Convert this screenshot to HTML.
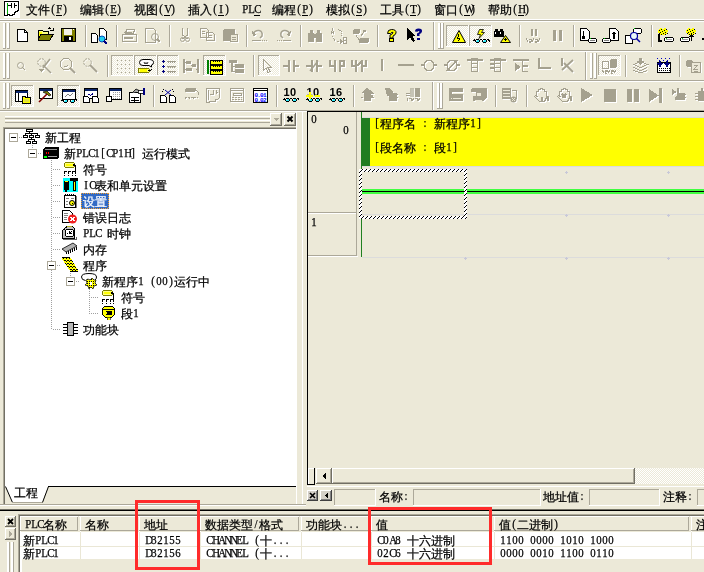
<!DOCTYPE html><html><head><meta charset="utf-8"><style>
html,body{margin:0;padding:0}
body{width:704px;height:572px;position:relative;overflow:hidden;background:#ECE9D8}
div,svg{position:absolute}
.t{will-change:transform;-webkit-text-stroke:0.25px currentColor;white-space:nowrap;font-size:12px;line-height:12px;font-family:"Liberation Sans",sans-serif}
.t span{position:static}
.t i{display:inline-block;width:6px;text-align:center;font-style:normal;font-family:"Liberation Serif",serif;transform:scaleX(.9);position:relative;top:-1px}
.c{font-family:"Liberation Sans",sans-serif}
</style></head><body>
<div style="left:4px;top:0px;width:16px;height:18px;background:#FFFFFF;"></div>
<svg style="left:4px;top:0px" width="16" height="18" viewBox="0 0 16 18" shape-rendering="crispEdges"><path d="M0.5 1.5H14.5V10.5H13.5V11.5H11.5V12.5H10.5V14.5H8.5V15.5H5.5V14.5H3.5V15.5H0.5Z" fill="none" stroke="#000"/><rect x="3" y="3" width="1" height="11" fill="#0a0"/><path d="M4 5.5H7M7.5 3V8M10.5 3V8M11 5.5H13" stroke="#000" fill="none"/></svg>
<div class="t " style="left:26px;top:4px;color:#000;"><span class="c">文件</span><i>(</i><i>F</i><i>)</i></div>
<div style="left:56px;top:15px;width:6px;height:1px;background:#000;"></div>
<div class="t " style="left:80px;top:4px;color:#000;"><span class="c">编辑</span><i>(</i><i>E</i><i>)</i></div>
<div style="left:110px;top:15px;width:6px;height:1px;background:#000;"></div>
<div class="t " style="left:134px;top:4px;color:#000;"><span class="c">视图</span><i>(</i><i>V</i><i>)</i></div>
<div style="left:164px;top:15px;width:6px;height:1px;background:#000;"></div>
<div class="t " style="left:188px;top:4px;color:#000;"><span class="c">插入</span><i>(</i><i>I</i><i>)</i></div>
<div style="left:218px;top:15px;width:6px;height:1px;background:#000;"></div>
<div class="t " style="left:272px;top:4px;color:#000;"><span class="c">编程</span><i>(</i><i>P</i><i>)</i></div>
<div style="left:302px;top:15px;width:6px;height:1px;background:#000;"></div>
<div class="t " style="left:326px;top:4px;color:#000;"><span class="c">模拟</span><i>(</i><i>S</i><i>)</i></div>
<div style="left:356px;top:15px;width:6px;height:1px;background:#000;"></div>
<div class="t " style="left:380px;top:4px;color:#000;"><span class="c">工具</span><i>(</i><i>T</i><i>)</i></div>
<div style="left:410px;top:15px;width:6px;height:1px;background:#000;"></div>
<div class="t " style="left:434px;top:4px;color:#000;"><span class="c">窗口</span><i>(</i><i>W</i><i>)</i></div>
<div style="left:464px;top:15px;width:6px;height:1px;background:#000;"></div>
<div class="t " style="left:488px;top:4px;color:#000;"><span class="c">帮助</span><i>(</i><i>H</i><i>)</i></div>
<div style="left:518px;top:15px;width:6px;height:1px;background:#000;"></div>
<div class="t " style="left:242px;top:4px;color:#000;"><i>P</i><i>L</i><i>C</i></div>
<div style="left:254px;top:15px;width:6px;height:1px;background:#000;"></div>
<div style="left:0px;top:19px;width:704px;height:1px;background:#FFFFFF;"></div>
<div style="left:0px;top:20px;width:704px;height:1px;background:#ACA899;"></div>
<div style="left:0px;top:21px;width:704px;height:1px;background:#FFFFFF;"></div>
<div style="left:0px;top:50px;width:704px;height:1px;background:#ACA899;"></div>
<div style="left:0px;top:51px;width:704px;height:1px;background:#FFFFFF;"></div>
<div style="left:0px;top:80px;width:704px;height:1px;background:#ACA899;"></div>
<div style="left:0px;top:81px;width:704px;height:1px;background:#FFFFFF;"></div>
<div style="left:0px;top:110px;width:307px;height:1px;background:#ACA899;"></div>
<div style="left:0px;top:111px;width:307px;height:1px;background:#FFFFFF;"></div>
<div style="left:307px;top:110px;width:397px;height:1px;background:#ACA899;"></div>
<div style="left:3px;top:23px;width:2px;height:26px;background:#FFFFFF;"></div>
<div style="left:5px;top:23px;width:1px;height:26px;background:#ACA899;"></div>
<div style="left:3px;top:48px;width:3px;height:1px;background:#ACA899;"></div>
<div style="left:7px;top:23px;width:2px;height:26px;background:#FFFFFF;"></div>
<div style="left:9px;top:23px;width:1px;height:26px;background:#ACA899;"></div>
<div style="left:7px;top:48px;width:3px;height:1px;background:#ACA899;"></div>
<div style="left:3px;top:53px;width:2px;height:26px;background:#FFFFFF;"></div>
<div style="left:5px;top:53px;width:1px;height:26px;background:#ACA899;"></div>
<div style="left:3px;top:78px;width:3px;height:1px;background:#ACA899;"></div>
<div style="left:7px;top:53px;width:2px;height:26px;background:#FFFFFF;"></div>
<div style="left:9px;top:53px;width:1px;height:26px;background:#ACA899;"></div>
<div style="left:7px;top:78px;width:3px;height:1px;background:#ACA899;"></div>
<div style="left:3px;top:83px;width:2px;height:26px;background:#FFFFFF;"></div>
<div style="left:5px;top:83px;width:1px;height:26px;background:#ACA899;"></div>
<div style="left:3px;top:108px;width:3px;height:1px;background:#ACA899;"></div>
<div style="left:7px;top:83px;width:2px;height:26px;background:#FFFFFF;"></div>
<div style="left:9px;top:83px;width:1px;height:26px;background:#ACA899;"></div>
<div style="left:7px;top:108px;width:3px;height:1px;background:#ACA899;"></div>
<div style="left:85px;top:25px;width:1px;height:22px;background:#ACA899;"></div>
<div style="left:86px;top:25px;width:1px;height:22px;background:#FFFFFF;"></div>
<div style="left:116px;top:25px;width:1px;height:22px;background:#ACA899;"></div>
<div style="left:117px;top:25px;width:1px;height:22px;background:#FFFFFF;"></div>
<div style="left:169px;top:25px;width:1px;height:22px;background:#ACA899;"></div>
<div style="left:170px;top:25px;width:1px;height:22px;background:#FFFFFF;"></div>
<div style="left:246px;top:25px;width:1px;height:22px;background:#ACA899;"></div>
<div style="left:247px;top:25px;width:1px;height:22px;background:#FFFFFF;"></div>
<div style="left:300px;top:25px;width:1px;height:22px;background:#ACA899;"></div>
<div style="left:301px;top:25px;width:1px;height:22px;background:#FFFFFF;"></div>
<div style="left:377px;top:25px;width:1px;height:22px;background:#ACA899;"></div>
<div style="left:378px;top:25px;width:1px;height:22px;background:#FFFFFF;"></div>
<div style="left:519px;top:25px;width:1px;height:22px;background:#ACA899;"></div>
<div style="left:520px;top:25px;width:1px;height:22px;background:#FFFFFF;"></div>
<div style="left:573px;top:25px;width:1px;height:22px;background:#ACA899;"></div>
<div style="left:574px;top:25px;width:1px;height:22px;background:#FFFFFF;"></div>
<div style="left:651px;top:25px;width:1px;height:22px;background:#ACA899;"></div>
<div style="left:652px;top:25px;width:1px;height:22px;background:#FFFFFF;"></div>
<div style="left:433px;top:22px;width:1px;height:28px;background:#ACA899;"></div>
<div style="left:434px;top:22px;width:1px;height:28px;background:#FFFFFF;"></div>
<div style="left:438px;top:23px;width:2px;height:26px;background:#FFFFFF;"></div>
<div style="left:440px;top:23px;width:1px;height:26px;background:#ACA899;"></div>
<div style="left:438px;top:48px;width:3px;height:1px;background:#ACA899;"></div>
<div style="left:441px;top:23px;width:2px;height:26px;background:#FFFFFF;"></div>
<div style="left:443px;top:23px;width:1px;height:26px;background:#ACA899;"></div>
<div style="left:441px;top:48px;width:3px;height:1px;background:#ACA899;"></div>
<div style="left:107px;top:55px;width:1px;height:22px;background:#ACA899;"></div>
<div style="left:108px;top:55px;width:1px;height:22px;background:#FFFFFF;"></div>
<div style="left:253px;top:55px;width:1px;height:22px;background:#ACA899;"></div>
<div style="left:254px;top:55px;width:1px;height:22px;background:#FFFFFF;"></div>
<div style="left:625px;top:55px;width:1px;height:22px;background:#ACA899;"></div>
<div style="left:626px;top:55px;width:1px;height:22px;background:#FFFFFF;"></div>
<div style="left:679px;top:55px;width:1px;height:22px;background:#ACA899;"></div>
<div style="left:680px;top:55px;width:1px;height:22px;background:#FFFFFF;"></div>
<div style="left:585px;top:52px;width:1px;height:28px;background:#ACA899;"></div>
<div style="left:586px;top:52px;width:1px;height:28px;background:#FFFFFF;"></div>
<div style="left:590px;top:53px;width:2px;height:26px;background:#FFFFFF;"></div>
<div style="left:592px;top:53px;width:1px;height:26px;background:#ACA899;"></div>
<div style="left:590px;top:78px;width:3px;height:1px;background:#ACA899;"></div>
<div style="left:594px;top:53px;width:2px;height:26px;background:#FFFFFF;"></div>
<div style="left:596px;top:53px;width:1px;height:26px;background:#ACA899;"></div>
<div style="left:594px;top:78px;width:3px;height:1px;background:#ACA899;"></div>
<div style="left:446px;top:25px;width:23px;height:22px;background:#F5F4EC;background-image:repeating-conic-gradient(#fff 0 25%,#ECE9D8 0 50%);background-size:2px 2px;"></div>
<div style="left:446px;top:25px;width:23px;height:1px;background:#ACA899;"></div>
<div style="left:446px;top:25px;width:1px;height:22px;background:#ACA899;"></div>
<div style="left:446px;top:46px;width:23px;height:1px;background:#FFFFFF;"></div>
<div style="left:468px;top:25px;width:1px;height:22px;background:#FFFFFF;"></div>
<div style="left:469px;top:25px;width:23px;height:22px;background:#F5F4EC;background-image:repeating-conic-gradient(#fff 0 25%,#ECE9D8 0 50%);background-size:2px 2px;"></div>
<div style="left:469px;top:25px;width:23px;height:1px;background:#ACA899;"></div>
<div style="left:469px;top:25px;width:1px;height:22px;background:#ACA899;"></div>
<div style="left:469px;top:46px;width:23px;height:1px;background:#FFFFFF;"></div>
<div style="left:491px;top:25px;width:1px;height:22px;background:#FFFFFF;"></div>
<div style="left:111px;top:55px;width:23px;height:21px;background:#F5F4EC;background-image:repeating-conic-gradient(#fff 0 25%,#ECE9D8 0 50%);background-size:2px 2px;"></div>
<div style="left:111px;top:55px;width:23px;height:1px;background:#ACA899;"></div>
<div style="left:111px;top:55px;width:1px;height:21px;background:#ACA899;"></div>
<div style="left:111px;top:75px;width:23px;height:1px;background:#FFFFFF;"></div>
<div style="left:133px;top:55px;width:1px;height:21px;background:#FFFFFF;"></div>
<div style="left:134px;top:55px;width:23px;height:21px;background:#F5F4EC;background-image:repeating-conic-gradient(#fff 0 25%,#ECE9D8 0 50%);background-size:2px 2px;"></div>
<div style="left:134px;top:55px;width:23px;height:1px;background:#ACA899;"></div>
<div style="left:134px;top:55px;width:1px;height:21px;background:#ACA899;"></div>
<div style="left:134px;top:75px;width:23px;height:1px;background:#FFFFFF;"></div>
<div style="left:156px;top:55px;width:1px;height:21px;background:#FFFFFF;"></div>
<div style="left:157px;top:55px;width:22px;height:21px;background:#F5F4EC;background-image:repeating-conic-gradient(#fff 0 25%,#ECE9D8 0 50%);background-size:2px 2px;"></div>
<div style="left:157px;top:55px;width:22px;height:1px;background:#ACA899;"></div>
<div style="left:157px;top:55px;width:1px;height:21px;background:#ACA899;"></div>
<div style="left:157px;top:75px;width:22px;height:1px;background:#FFFFFF;"></div>
<div style="left:178px;top:55px;width:1px;height:21px;background:#FFFFFF;"></div>
<div style="left:203px;top:55px;width:23px;height:21px;background:#F5F4EC;background-image:repeating-conic-gradient(#fff 0 25%,#ECE9D8 0 50%);background-size:2px 2px;"></div>
<div style="left:203px;top:55px;width:23px;height:1px;background:#ACA899;"></div>
<div style="left:203px;top:55px;width:1px;height:21px;background:#ACA899;"></div>
<div style="left:203px;top:75px;width:23px;height:1px;background:#FFFFFF;"></div>
<div style="left:225px;top:55px;width:1px;height:21px;background:#FFFFFF;"></div>
<div style="left:258px;top:55px;width:22px;height:21px;background:#F5F4EC;background-image:repeating-conic-gradient(#fff 0 25%,#ECE9D8 0 50%);background-size:2px 2px;"></div>
<div style="left:258px;top:55px;width:22px;height:1px;background:#ACA899;"></div>
<div style="left:258px;top:55px;width:1px;height:21px;background:#ACA899;"></div>
<div style="left:258px;top:75px;width:22px;height:1px;background:#FFFFFF;"></div>
<div style="left:279px;top:55px;width:1px;height:21px;background:#FFFFFF;"></div>
<div style="left:598px;top:55px;width:23px;height:21px;background:#F5F4EC;background-image:repeating-conic-gradient(#fff 0 25%,#ECE9D8 0 50%);background-size:2px 2px;"></div>
<div style="left:598px;top:55px;width:23px;height:1px;background:#ACA899;"></div>
<div style="left:598px;top:55px;width:1px;height:21px;background:#ACA899;"></div>
<div style="left:598px;top:75px;width:23px;height:1px;background:#FFFFFF;"></div>
<div style="left:620px;top:55px;width:1px;height:21px;background:#FFFFFF;"></div>
<div style="left:11px;top:85px;width:23px;height:22px;background:#F5F4EC;background-image:repeating-conic-gradient(#fff 0 25%,#ECE9D8 0 50%);background-size:2px 2px;"></div>
<div style="left:11px;top:85px;width:23px;height:1px;background:#ACA899;"></div>
<div style="left:11px;top:85px;width:1px;height:22px;background:#ACA899;"></div>
<div style="left:11px;top:106px;width:23px;height:1px;background:#FFFFFF;"></div>
<div style="left:33px;top:85px;width:1px;height:22px;background:#FFFFFF;"></div>
<div style="left:57px;top:85px;width:23px;height:22px;background:#F5F4EC;background-image:repeating-conic-gradient(#fff 0 25%,#ECE9D8 0 50%);background-size:2px 2px;"></div>
<div style="left:57px;top:85px;width:23px;height:1px;background:#ACA899;"></div>
<div style="left:57px;top:85px;width:1px;height:22px;background:#ACA899;"></div>
<div style="left:57px;top:106px;width:23px;height:1px;background:#FFFFFF;"></div>
<div style="left:79px;top:85px;width:1px;height:22px;background:#FFFFFF;"></div>
<div style="left:153px;top:85px;width:1px;height:22px;background:#ACA899;"></div>
<div style="left:154px;top:85px;width:1px;height:22px;background:#FFFFFF;"></div>
<div style="left:276px;top:85px;width:1px;height:22px;background:#ACA899;"></div>
<div style="left:277px;top:85px;width:1px;height:22px;background:#FFFFFF;"></div>
<div style="left:353px;top:85px;width:1px;height:22px;background:#ACA899;"></div>
<div style="left:354px;top:85px;width:1px;height:22px;background:#FFFFFF;"></div>
<div style="left:495px;top:85px;width:1px;height:22px;background:#ACA899;"></div>
<div style="left:496px;top:85px;width:1px;height:22px;background:#FFFFFF;"></div>
<div style="left:526px;top:85px;width:1px;height:22px;background:#ACA899;"></div>
<div style="left:527px;top:85px;width:1px;height:22px;background:#FFFFFF;"></div>
<div style="left:432px;top:82px;width:1px;height:28px;background:#ACA899;"></div>
<div style="left:433px;top:82px;width:1px;height:28px;background:#FFFFFF;"></div>
<div style="left:437px;top:83px;width:2px;height:26px;background:#FFFFFF;"></div>
<div style="left:439px;top:83px;width:1px;height:26px;background:#ACA899;"></div>
<div style="left:437px;top:108px;width:3px;height:1px;background:#ACA899;"></div>
<div style="left:440px;top:83px;width:2px;height:26px;background:#FFFFFF;"></div>
<div style="left:442px;top:83px;width:1px;height:26px;background:#ACA899;"></div>
<div style="left:440px;top:108px;width:3px;height:1px;background:#ACA899;"></div>
<svg style="left:17px;top:29px" width="11" height="13" viewBox="0 0 11 13" shape-rendering="crispEdges"><path d="M0.5 0.5H7.5L10.5 3.5V12.5H0.5Z" fill="#fff" stroke="#000"/><path d="M7.5 0.5V3.5H10.5" fill="none" stroke="#000"/></svg>
<svg style="left:38px;top:27px" width="16" height="14" viewBox="0 0 16 14" shape-rendering="crispEdges"><path d="M0.5 3.5H4.5L5.5 4.5H10.5V12.5H0.5Z" fill="#FFFF80" stroke="#000"/><rect x="1" y="5" width="3" height="6" fill="#ff0"/><path d="M3 7H15.5L12 13H0Z" fill="#808000" stroke="#000" stroke-width="1"/><path d="M9.5 2.5Q11 0 13.5 1.5M12 3H15V1" fill="none" stroke="#000"/></svg>
<svg style="left:61px;top:28px" width="15" height="14" viewBox="0 0 15 14" shape-rendering="crispEdges"><rect x="0" y="0" width="15" height="14" fill="#000"/><rect x="1" y="1" width="13" height="12" fill="#808000"/><rect x="3" y="1" width="8" height="6" fill="#F4F2E6"/><rect x="3" y="8" width="9" height="5" fill="#000"/><rect x="8" y="9" width="2" height="3" fill="#fff"/><rect x="12" y="1" width="1" height="1" fill="#fff"/></svg>
<svg style="left:91px;top:28px" width="17" height="16" viewBox="0 0 17 16" shape-rendering="crispEdges"><path d="M0.5 5.5H4.5L6.5 7.5V14.5H0.5Z" fill="#fff" stroke="#000"/><path d="M8.5 0.5H12.5L15.5 3.5V11.5H8.5Z" fill="#fff" stroke="#000"/><circle cx="11" cy="11" r="3" fill="#20D0F0" stroke="#0050C0" shape-rendering="auto"/><path d="M13 13L16 16" stroke="#000080" stroke-width="2"/></svg>
<svg style="left:122px;top:29px" width="17" height="15" viewBox="0 0 17 15" shape-rendering="crispEdges"><g transform="translate(1,1)" style="color:#fff"><path d="M4.5 0.5H12.5L11.5 4.5H3.5Z" fill="none" stroke="currentColor"/><path d="M0.5 5.5H14.5V12.5H0.5Z" fill="none" stroke="currentColor"/><rect x="2" y="8" width="9" height="2" fill="currentColor"/><path d="M2 3H10" stroke="currentColor"/></g><g style="color:#A5A18F"><path d="M4.5 0.5H12.5L11.5 4.5H3.5Z" fill="none" stroke="currentColor"/><path d="M0.5 5.5H14.5V12.5H0.5Z" fill="none" stroke="currentColor"/><rect x="2" y="8" width="9" height="2" fill="currentColor"/><path d="M2 3H10" stroke="currentColor"/></g></svg>
<svg style="left:145px;top:28px" width="17" height="16" viewBox="0 0 17 16" shape-rendering="crispEdges"><g transform="translate(1,1)" style="color:#fff"><path d="M0.5 0.5H8.5L10.5 2.5V14.5H0.5Z" fill="none" stroke="currentColor"/><circle cx="10" cy="9" r="3.5" fill="none" stroke="currentColor" shape-rendering="auto"/><path d="M12 11L15 14" stroke="currentColor" stroke-width="2"/></g><g style="color:#A5A18F"><path d="M0.5 0.5H8.5L10.5 2.5V14.5H0.5Z" fill="none" stroke="currentColor"/><circle cx="10" cy="9" r="3.5" fill="none" stroke="currentColor" shape-rendering="auto"/><path d="M12 11L15 14" stroke="currentColor" stroke-width="2"/></g></svg>
<svg style="left:180px;top:28px" width="11" height="15" viewBox="0 0 11 15" shape-rendering="crispEdges"><g transform="translate(1,1)" style="color:#fff"><path d="M2.5 0V7L7.5 11M7.5 0V7L2.5 11" fill="none" stroke="currentColor"/><circle cx="2.5" cy="11.5" r="2" fill="none" stroke="currentColor" shape-rendering="auto"/><circle cx="7.5" cy="11.5" r="2" fill="none" stroke="currentColor" shape-rendering="auto"/></g><g style="color:#A5A18F"><path d="M2.5 0V7L7.5 11M7.5 0V7L2.5 11" fill="none" stroke="currentColor"/><circle cx="2.5" cy="11.5" r="2" fill="none" stroke="currentColor" shape-rendering="auto"/><circle cx="7.5" cy="11.5" r="2" fill="none" stroke="currentColor" shape-rendering="auto"/></g></svg>
<svg style="left:200px;top:28px" width="16" height="14" viewBox="0 0 16 14" shape-rendering="crispEdges"><g transform="translate(1,1)" style="color:#fff"><path d="M0.5 0.5H6.5L8.5 2.5V9.5H0.5Z" fill="none" stroke="currentColor"/><path d="M6.5 4.5H12.5L14.5 6.5V12.5H6.5Z" fill="none" stroke="currentColor"/><path d="M2 3H5M2 5H5M8 7H12M8 9H12" stroke="currentColor"/></g><g style="color:#A5A18F"><path d="M0.5 0.5H6.5L8.5 2.5V9.5H0.5Z" fill="none" stroke="currentColor"/><path d="M6.5 4.5H12.5L14.5 6.5V12.5H6.5Z" fill="none" stroke="currentColor"/><path d="M2 3H5M2 5H5M8 7H12M8 9H12" stroke="currentColor"/></g></svg>
<svg style="left:223px;top:28px" width="16" height="15" viewBox="0 0 16 15" shape-rendering="crispEdges"><g transform="translate(1,1)" style="color:#fff"><rect x="0" y="1" width="12" height="12" rx="2" fill="currentColor"/><path d="M7.5 6.5H14.5V13.5H7.5Z" fill="#ECE9D8" stroke="currentColor"/><path d="M9 9H13M9 11H13" stroke="currentColor"/></g><g style="color:#A5A18F"><rect x="0" y="1" width="12" height="12" rx="2" fill="currentColor"/><path d="M7.5 6.5H14.5V13.5H7.5Z" fill="#ECE9D8" stroke="currentColor"/><path d="M9 9H13M9 11H13" stroke="currentColor"/></g></svg>
<svg style="left:252px;top:29px" width="17" height="14" viewBox="0 0 17 14" shape-rendering="crispEdges"><g transform="translate(1,1)" style="color:#fff"><path d="M1 5Q3 1 7 1.5Q11 2.5 10 7L8 9" fill="none" stroke="currentColor" stroke-width="1.5" shape-rendering="auto"/><path d="M0 2L1 7L5 6Z" fill="currentColor"/><path d="M0 11H9" stroke="currentColor"/><path d="M10 11H16" stroke="currentColor" stroke-dasharray="1 1"/></g><g style="color:#A5A18F"><path d="M1 5Q3 1 7 1.5Q11 2.5 10 7L8 9" fill="none" stroke="currentColor" stroke-width="1.5" shape-rendering="auto"/><path d="M0 2L1 7L5 6Z" fill="currentColor"/><path d="M0 11H9" stroke="currentColor"/><path d="M10 11H16" stroke="currentColor" stroke-dasharray="1 1"/></g></svg>
<svg style="left:277px;top:29px" width="15" height="14" viewBox="0 0 15 14" shape-rendering="crispEdges"><g transform="translate(1,1)" style="color:#fff"><path d="M13 5Q11 1 7 1.5Q3 2.5 4 7L6 9" fill="none" stroke="currentColor" stroke-width="1.5" shape-rendering="auto"/><path d="M14 2L13 7L9 6Z" fill="currentColor"/><path d="M6 11H14" stroke="currentColor"/><path d="M0 11H5" stroke="currentColor" stroke-dasharray="1 1"/></g><g style="color:#A5A18F"><path d="M13 5Q11 1 7 1.5Q3 2.5 4 7L6 9" fill="none" stroke="currentColor" stroke-width="1.5" shape-rendering="auto"/><path d="M14 2L13 7L9 6Z" fill="currentColor"/><path d="M6 11H14" stroke="currentColor"/><path d="M0 11H5" stroke="currentColor" stroke-dasharray="1 1"/></g></svg>
<svg style="left:308px;top:30px" width="16" height="13" viewBox="0 0 16 13" shape-rendering="crispEdges"><g transform="translate(1,1)" style="color:#fff"><rect x="2" y="0" width="3" height="3" fill="currentColor"/><rect x="9" y="0" width="3" height="3" fill="currentColor"/><rect x="0" y="3" width="6" height="9" fill="currentColor"/><rect x="8" y="3" width="6" height="9" fill="currentColor"/><rect x="5" y="4" width="4" height="4" fill="currentColor"/></g><g style="color:#A5A18F"><rect x="2" y="0" width="3" height="3" fill="currentColor"/><rect x="9" y="0" width="3" height="3" fill="currentColor"/><rect x="0" y="3" width="6" height="9" fill="currentColor"/><rect x="8" y="3" width="6" height="9" fill="currentColor"/><rect x="5" y="4" width="4" height="4" fill="currentColor"/></g></svg>
<svg style="left:330px;top:28px" width="17" height="16" viewBox="0 0 17 16" shape-rendering="crispEdges"><g transform="translate(1,1)" style="color:#fff"><path d="M1 6L2.5 1L4 6M1.5 4H3.5" fill="none" stroke="currentColor"/><path d="M2.5 8Q3 13 9 14" fill="none" stroke="currentColor" stroke-dasharray="1 1"/><path d="M10 11V16L13 13.5Z" fill="currentColor"/><path d="M8 1L11 3V8" fill="none" stroke="currentColor" stroke-dasharray="1 1"/><path d="M13.5 9.5H16V15.5H13.5ZM13.5 12.5H16" fill="none" stroke="currentColor"/></g><g style="color:#A5A18F"><path d="M1 6L2.5 1L4 6M1.5 4H3.5" fill="none" stroke="currentColor"/><path d="M2.5 8Q3 13 9 14" fill="none" stroke="currentColor" stroke-dasharray="1 1"/><path d="M10 11V16L13 13.5Z" fill="currentColor"/><path d="M8 1L11 3V8" fill="none" stroke="currentColor" stroke-dasharray="1 1"/><path d="M13.5 9.5H16V15.5H13.5ZM13.5 12.5H16" fill="none" stroke="currentColor"/></g></svg>
<svg style="left:353px;top:28px" width="17" height="16" viewBox="0 0 17 16" shape-rendering="crispEdges"><g transform="translate(1,1)" style="color:#fff"><rect x="0" y="1" width="7" height="5" rx="2" fill="currentColor"/><rect x="6" y="10" width="10" height="5" rx="2" fill="currentColor"/><path d="M8 8L12 2M10 2H12V4M3 7L6 12" fill="none" stroke="currentColor"/></g><g style="color:#A5A18F"><rect x="0" y="1" width="7" height="5" rx="2" fill="currentColor"/><rect x="6" y="10" width="10" height="5" rx="2" fill="currentColor"/><path d="M8 8L12 2M10 2H12V4M3 7L6 12" fill="none" stroke="currentColor"/></g></svg>
<svg style="left:386px;top:29px" width="12" height="13" viewBox="0 0 12 13" shape-rendering="crispEdges"><path d="M1.5 4.5Q1.5 0.5 5.5 0.5Q10.5 0.5 10 4Q9.5 6 7 7V9H4V6Q7 5 7 3.5Q6 2.5 4.5 4.5Z" fill="#FFFF00" stroke="#000" shape-rendering="auto"/><rect x="3.5" y="9.5" width="4" height="3" fill="#FFFF00" stroke="#000"/></svg>
<svg style="left:407px;top:28px" width="17" height="15" viewBox="0 0 17 15" shape-rendering="crispEdges"><path d="M0 0V12L3 9L6 14L8 13L5.5 8H9Z" fill="#000"/><path d="M8 3.5Q8 0.5 11.5 0.5Q15.5 0.5 15 3.5Q14.5 5.5 12.5 6V8H10V5.5Q12.5 4.5 12.5 3.5Q11.5 2.5 10.5 3.8Z" fill="#000080" shape-rendering="auto"/><rect x="10" y="10" width="3" height="2" fill="#000080"/></svg>
<svg style="left:452px;top:30px" width="14" height="13" viewBox="0 0 14 13" shape-rendering="crispEdges"><path d="M7 0.5L13.5 12.5H0.5Z" fill="#FFFF00" stroke="#000" shape-rendering="auto"/><path d="M7 4L5.5 8H8L6.5 11" fill="none" stroke="#000"/></svg>
<svg style="left:472px;top:29px" width="18" height="14" viewBox="0 0 18 14" shape-rendering="crispEdges"><path d="M7.5 0.5H11.5L9.5 3.5H12.5L7 9.5L8.5 5.5H5.5Z" fill="#FFFF00" stroke="#000" stroke-width="0.8" shape-rendering="auto"/><g transform="translate(1,10)"><path d="M0 1H1V0H2M14 0H15V1H16V3" fill="none" stroke="#000" stroke-width="1"/><path d="M3 0.5H6M2.5 1V3M6.5 1V3M3 3.5H6M10 0.5H13M9.5 1V3M13.5 1V3M10 3.5H13M7 0.5H9" fill="none" stroke="#000"/><rect x="3" y="1" width="3" height="2" fill="#30E8F8"/><rect x="10" y="1" width="3" height="2" fill="#30E8F8"/><rect x="3" y="1" width="1" height="1" fill="#fff"/><rect x="10" y="1" width="1" height="1" fill="#fff"/></g></svg>
<svg style="left:494px;top:28px" width="18" height="16" viewBox="0 0 18 16" shape-rendering="crispEdges"><rect x="1" y="1" width="3" height="2" fill="#000"/><rect x="6" y="1" width="3" height="2" fill="#000"/><rect x="0" y="3" width="5" height="6" fill="#000"/><rect x="5" y="3" width="5" height="6" fill="#000"/><rect x="4" y="4" width="2" height="2" fill="#000"/><rect x="1" y="4" width="1" height="2" fill="#fff"/><rect x="6" y="4" width="1" height="2" fill="#fff"/><path d="M11.5 7.5L16.5 14.5H6.5Z" fill="#FFFF00" stroke="#000" shape-rendering="auto"/><path d="M11.5 10V13M10 11.5H13" stroke="#000"/></svg>
<svg style="left:526px;top:29px" width="17" height="14" viewBox="0 0 17 14" shape-rendering="crispEdges"><g transform="translate(1,1)" style="color:#fff"><rect x="5" y="0" width="2" height="7" fill="currentColor"/><rect x="9" y="0" width="2" height="7" fill="currentColor"/><path d="M0.5 9.5L2 13M3 10H5V12H3V13H5M6 13L8 9M9 10H11V12H9V13H11M12 13L14 9" fill="none" stroke="currentColor"/></g><g style="color:#A5A18F"><rect x="5" y="0" width="2" height="7" fill="currentColor"/><rect x="9" y="0" width="2" height="7" fill="currentColor"/><path d="M0.5 9.5L2 13M3 10H5V12H3V13H5M6 13L8 9M9 10H11V12H9V13H11M12 13L14 9" fill="none" stroke="currentColor"/></g></svg>
<svg style="left:553px;top:30px" width="10" height="12" viewBox="0 0 10 12" shape-rendering="crispEdges"><g transform="translate(1,1)" style="color:#fff"><rect x="0" y="0" width="3" height="11" fill="currentColor"/><rect x="6" y="0" width="3" height="11" fill="currentColor"/></g><g style="color:#A5A18F"><rect x="0" y="0" width="3" height="11" fill="currentColor"/><rect x="6" y="0" width="3" height="11" fill="currentColor"/></g></svg>
<svg style="left:580px;top:28px" width="17" height="15" viewBox="0 0 17 15" shape-rendering="crispEdges"><path d="M0.5 0.5H6.5L9.5 3.5V12.5H0.5Z" fill="#fff" stroke="#000"/><rect x="3" y="3" width="1" height="8" fill="#000"/><rect x="2" y="8" width="3" height="3" fill="#000"/><rect x="8.5" y="10.5" width="8" height="4" rx="2" fill="#fff" stroke="#000"/><rect x="10" y="12" width="5" height="1" fill="#808080"/><rect x="10" y="10" width="1" height="1" fill="#0c0"/></svg>
<svg style="left:602px;top:28px" width="18" height="15" viewBox="0 0 18 15" shape-rendering="crispEdges"><path d="M7.5 0.5H13.5L16.5 3.5V12.5H7.5Z" fill="#fff" stroke="#000"/><path d="M12 3L9.5 6H11V11H13V6H14.5Z" fill="#000"/><rect x="0.5" y="10.5" width="8" height="4" rx="2" fill="#fff" stroke="#000"/><rect x="2" y="12" width="5" height="1" fill="#808080"/><rect x="2" y="10" width="1" height="1" fill="#0c0"/></svg>
<svg style="left:625px;top:28px" width="17" height="16" viewBox="0 0 17 16" shape-rendering="crispEdges"><rect x="8.5" y="0.5" width="8" height="5" rx="2" fill="#fff" stroke="#000"/><rect x="9" y="0" width="1" height="1" fill="#0c0"/><path d="M0.5 7.5H7.5V15.5H0.5Z" fill="#fff" stroke="#000"/><circle cx="9" cy="8" r="3.5" fill="#E8F8F8" stroke="#0000A0" stroke-width="1.2" shape-rendering="auto"/><path d="M11.5 10.5L15 14" stroke="#0000A0" stroke-width="1.5" shape-rendering="auto"/></svg>
<svg style="left:658px;top:28px" width="16" height="14" viewBox="0 0 16 14" shape-rendering="crispEdges"><g transform="translate(0,0)"><path d="M0 3L2 0H4L5 2L6 0H8L10 3L9 6L7 7H3L1 6Z" fill="#FFFF00"/><path d="M1 2H2M2 4H3M3 1H4M4 3H5M6 2H7M7 4H8M8 1H9M5 5H6M3 6H4M7 6H8M1 5H2M9 5H10" stroke="#000" stroke-width="1"/></g><path d="M1 6V12.5H4" fill="none" stroke="#000" stroke-width="2"/><rect x="6.5" y="9.5" width="9" height="4" rx="2" fill="#fff" stroke="#000"/><rect x="8" y="11" width="6" height="1" fill="#A0A0A0"/><rect x="8" y="10" width="1" height="1" fill="#0c0"/></svg>
<svg style="left:680px;top:28px" width="17" height="14" viewBox="0 0 17 14" shape-rendering="crispEdges"><g transform="translate(6,0)"><path d="M0 3L2 0H4L5 2L6 0H8L10 3L9 6L7 7H3L1 6Z" fill="#FFFF00"/><path d="M1 2H2M2 4H3M3 1H4M4 3H5M6 2H7M7 4H8M8 1H9M5 5H6M3 6H4M7 6H8M1 5H2M9 5H10" stroke="#000" stroke-width="1"/></g><path d="M11.5 13V7M9.5 9L11.5 6.5L13.5 9" fill="none" stroke="#000" stroke-width="1.2"/><rect x="0.5" y="9.5" width="9" height="4" rx="2" fill="#fff" stroke="#000"/><rect x="2" y="11" width="6" height="1" fill="#A0A0A0"/><rect x="2" y="10" width="1" height="1" fill="#0c0"/></svg>
<svg style="left:701px;top:37px" width="3" height="3" viewBox="0 0 3 3" shape-rendering="crispEdges"><rect x="1" y="1" width="2" height="2" fill="#000"/></svg>
<svg style="left:17px;top:62px" width="10" height="9" viewBox="0 0 10 9" shape-rendering="crispEdges"><g transform="translate(1,1)" style="color:#fff"><circle cx="3.5" cy="3.5" r="3" fill="none" stroke="currentColor" shape-rendering="auto"/><path d="M5.5 5.5L8.5 8.5" stroke="currentColor" stroke-width="1.3"/></g><g style="color:#A5A18F"><circle cx="3.5" cy="3.5" r="3" fill="none" stroke="currentColor" shape-rendering="auto"/><path d="M5.5 5.5L8.5 8.5" stroke="currentColor" stroke-width="1.3"/></g></svg>
<svg style="left:37px;top:58px" width="16" height="16" viewBox="0 0 16 16" shape-rendering="crispEdges"><g transform="translate(1,1)" style="color:#fff"><circle cx="4.5" cy="4.5" r="3.8" fill="none" stroke="currentColor" stroke-dasharray="2 1" shape-rendering="auto"/><path d="M6 7L14 15M6 10L13 1" stroke="currentColor" stroke-width="1.6" shape-rendering="auto"/><path d="M2 11L4 14L7 11Z" fill="currentColor"/></g><g style="color:#A5A18F"><circle cx="4.5" cy="4.5" r="3.8" fill="none" stroke="currentColor" stroke-dasharray="2 1" shape-rendering="auto"/><path d="M6 7L14 15M6 10L13 1" stroke="currentColor" stroke-width="1.6" shape-rendering="auto"/><path d="M2 11L4 14L7 11Z" fill="currentColor"/></g></svg>
<svg style="left:60px;top:58px" width="16" height="16" viewBox="0 0 16 16" shape-rendering="crispEdges"><g transform="translate(1,1)" style="color:#fff"><path d="M3.5 0.5H8.5L11.5 3.5V8.5L8.5 11.5H3.5L0.5 8.5V3.5Z" fill="none" stroke="currentColor"/><path d="M4 8Q6 9.5 8 7" fill="none" stroke="currentColor"/><path d="M10 10L15 15" stroke="currentColor" stroke-width="1.8" shape-rendering="auto"/></g><g style="color:#A5A18F"><path d="M3.5 0.5H8.5L11.5 3.5V8.5L8.5 11.5H3.5L0.5 8.5V3.5Z" fill="none" stroke="currentColor"/><path d="M4 8Q6 9.5 8 7" fill="none" stroke="currentColor"/><path d="M10 10L15 15" stroke="currentColor" stroke-width="1.8" shape-rendering="auto"/></g></svg>
<svg style="left:83px;top:58px" width="16" height="16" viewBox="0 0 16 16" shape-rendering="crispEdges"><g transform="translate(1,1)" style="color:#fff"><circle cx="4.5" cy="4.5" r="3.8" fill="none" stroke="currentColor" stroke-dasharray="2 1" shape-rendering="auto"/><path d="M7 7L14 14" stroke="currentColor" stroke-width="1.8" shape-rendering="auto"/></g><g style="color:#A5A18F"><circle cx="4.5" cy="4.5" r="3.8" fill="none" stroke="currentColor" stroke-dasharray="2 1" shape-rendering="auto"/><path d="M7 7L14 14" stroke="currentColor" stroke-width="1.8" shape-rendering="auto"/></g></svg>
<svg style="left:117px;top:60px" width="14" height="14" viewBox="0 0 14 14" shape-rendering="crispEdges"><rect x="0" y="0" width="1" height="1" fill="#A8A494"/><rect x="0" y="4" width="1" height="1" fill="#A8A494"/><rect x="0" y="8" width="1" height="1" fill="#A8A494"/><rect x="0" y="12" width="1" height="1" fill="#A8A494"/><rect x="4" y="0" width="1" height="1" fill="#A8A494"/><rect x="4" y="4" width="1" height="1" fill="#A8A494"/><rect x="4" y="8" width="1" height="1" fill="#A8A494"/><rect x="4" y="12" width="1" height="1" fill="#A8A494"/><rect x="8" y="0" width="1" height="1" fill="#A8A494"/><rect x="8" y="4" width="1" height="1" fill="#A8A494"/><rect x="8" y="8" width="1" height="1" fill="#A8A494"/><rect x="8" y="12" width="1" height="1" fill="#A8A494"/><rect x="12" y="0" width="1" height="1" fill="#A8A494"/><rect x="12" y="4" width="1" height="1" fill="#A8A494"/><rect x="12" y="8" width="1" height="1" fill="#A8A494"/><rect x="12" y="12" width="1" height="1" fill="#A8A494"/></svg>
<svg style="left:138px;top:59px" width="17" height="15" viewBox="0 0 17 15" shape-rendering="crispEdges"><path d="M5 0.5H11Q15.5 0.5 15.5 3.5Q15.5 5.5 13.5 6V8L11 6.5H5Q1.5 6.5 1.5 3.5Q1.5 0.5 5 0.5Z" fill="#fff" stroke="#000" shape-rendering="auto"/><path d="M6 3L7 5L8 3.5L9 5L10 3" fill="none" stroke="#000" stroke-width="0.8" shape-rendering="auto"/><path d="M0.5 9.5H10.5L12.5 11.5L10.5 13.5H0.5Z" fill="#FFFF80" stroke="#808000"/><rect x="2" y="10" width="7" height="3" fill="#FFFF00"/><path d="M10 11L12 12L14 10" fill="none" stroke="#000"/></svg>
<svg style="left:162px;top:60px" width="15" height="14" viewBox="0 0 15 14" shape-rendering="crispEdges"><path d="M1.5 0V3M0 1.5H3M1.5 5V8M0 6.5H3M1.5 10V13M0 11.5H3" stroke="#000080"/><path d="M5 1.5H14M5 6.5H14M5 11.5H14" stroke="#A09C8C"/><path d="M6 2.5H14M6 7.5H14M6 12.5H14" stroke="#A09C8C" stroke-dasharray="1 1"/></svg>
<svg style="left:183px;top:59px" width="17" height="15" viewBox="0 0 17 15" shape-rendering="crispEdges"><g transform="translate(1,1)" style="color:#fff"><rect x="0" y="0" width="2" height="14" fill="currentColor"/><rect x="14" y="0" width="2" height="14" fill="currentColor"/><rect x="3" y="2" width="5" height="3" fill="currentColor"/><rect x="9" y="5" width="4" height="3" fill="currentColor"/><rect x="3" y="9" width="6" height="3" fill="currentColor"/><path d="M2 3H3M8 6H9M2 10H3M13 10H14" stroke="currentColor"/></g><g style="color:#A5A18F"><rect x="0" y="0" width="2" height="14" fill="currentColor"/><rect x="14" y="0" width="2" height="14" fill="currentColor"/><rect x="3" y="2" width="5" height="3" fill="currentColor"/><rect x="9" y="5" width="4" height="3" fill="currentColor"/><rect x="3" y="9" width="6" height="3" fill="currentColor"/><path d="M2 3H3M8 6H9M2 10H3M13 10H14" stroke="currentColor"/></g></svg>
<svg style="left:207px;top:60px" width="16" height="15" viewBox="0 0 16 15" shape-rendering="crispEdges"><rect x="0" y="0" width="2" height="14" fill="#008000"/><rect x="3" y="0" width="13" height="15" fill="#000"/><rect x="4" y="1" width="11" height="3" fill="#FFFF00"/><rect x="4" y="6" width="11" height="3" fill="#FFFF00"/><rect x="4" y="11" width="11" height="3" fill="#FFFF00"/><path d="M6 1.5H13M6 6.5H13M6 11.5H13" stroke="#000" stroke-dasharray="1 1"/></svg>
<svg style="left:229px;top:59px" width="17" height="15" viewBox="0 0 17 15" shape-rendering="crispEdges"><g transform="translate(1,1)" style="color:#fff"><rect x="0" y="1" width="8" height="3" fill="currentColor"/><rect x="2" y="4" width="2" height="9" fill="currentColor"/><rect x="6" y="5" width="9" height="4" fill="currentColor"/><rect x="6" y="10" width="9" height="4" fill="currentColor"/><rect x="4" y="7" width="2" height="1" fill="currentColor"/><rect x="4" y="12" width="2" height="1" fill="currentColor"/></g><g style="color:#A5A18F"><rect x="0" y="1" width="8" height="3" fill="currentColor"/><rect x="2" y="4" width="2" height="9" fill="currentColor"/><rect x="6" y="5" width="9" height="4" fill="currentColor"/><rect x="6" y="10" width="9" height="4" fill="currentColor"/><rect x="4" y="7" width="2" height="1" fill="currentColor"/><rect x="4" y="12" width="2" height="1" fill="currentColor"/></g></svg>
<svg style="left:263px;top:59px" width="10" height="15" viewBox="0 0 10 15" shape-rendering="crispEdges"><g transform="translate(1,1)" style="color:#fff"><path d="M0.5 0.5V11.5L3 9L5 13.5L7 12.5L5 8.5H8.5Z" fill="none" stroke="currentColor"/></g><g style="color:#A5A18F"><path d="M0.5 0.5V11.5L3 9L5 13.5L7 12.5L5 8.5H8.5Z" fill="none" stroke="currentColor"/></g></svg>
<svg style="left:283px;top:60px" width="17" height="12" viewBox="0 0 17 12" shape-rendering="crispEdges"><g transform="translate(1,1)" style="color:#fff"><rect x="0" y="5" width="5" height="2" fill="currentColor"/><rect x="5" y="0" width="2" height="12" fill="currentColor"/><rect x="10" y="0" width="2" height="12" fill="currentColor"/><rect x="12" y="5" width="4" height="2" fill="currentColor"/></g><g style="color:#A5A18F"><rect x="0" y="5" width="5" height="2" fill="currentColor"/><rect x="5" y="0" width="2" height="12" fill="currentColor"/><rect x="10" y="0" width="2" height="12" fill="currentColor"/><rect x="12" y="5" width="4" height="2" fill="currentColor"/></g></svg>
<svg style="left:306px;top:60px" width="17" height="12" viewBox="0 0 17 12" shape-rendering="crispEdges"><g transform="translate(1,1)" style="color:#fff"><rect x="0" y="5" width="5" height="2" fill="currentColor"/><rect x="5" y="0" width="2" height="12" fill="currentColor"/><rect x="10" y="0" width="2" height="12" fill="currentColor"/><rect x="12" y="5" width="4" height="2" fill="currentColor"/><path d="M4 11L12 1" stroke="currentColor" stroke-width="1.5" shape-rendering="auto"/></g><g style="color:#A5A18F"><rect x="0" y="5" width="5" height="2" fill="currentColor"/><rect x="5" y="0" width="2" height="12" fill="currentColor"/><rect x="10" y="0" width="2" height="12" fill="currentColor"/><rect x="12" y="5" width="4" height="2" fill="currentColor"/><path d="M4 11L12 1" stroke="currentColor" stroke-width="1.5" shape-rendering="auto"/></g></svg>
<svg style="left:329px;top:60px" width="17" height="12" viewBox="0 0 17 12" shape-rendering="crispEdges"><g transform="translate(1,1)" style="color:#fff"><path d="M1 0V6H6" fill="none" stroke="currentColor" stroke-width="2"/><rect x="5" y="0" width="2" height="12" fill="currentColor"/><rect x="10" y="0" width="2" height="12" fill="currentColor"/><path d="M12 1H15V6H12" fill="none" stroke="currentColor" stroke-width="2"/></g><g style="color:#A5A18F"><path d="M1 0V6H6" fill="none" stroke="currentColor" stroke-width="2"/><rect x="5" y="0" width="2" height="12" fill="currentColor"/><rect x="10" y="0" width="2" height="12" fill="currentColor"/><path d="M12 1H15V6H12" fill="none" stroke="currentColor" stroke-width="2"/></g></svg>
<svg style="left:351px;top:60px" width="17" height="12" viewBox="0 0 17 12" shape-rendering="crispEdges"><g transform="translate(1,1)" style="color:#fff"><path d="M1 0V6H4" fill="none" stroke="currentColor" stroke-width="2"/><rect x="4" y="0" width="2" height="12" fill="currentColor"/><path d="M6 6L10 2" stroke="currentColor" stroke-width="1.5"/><rect x="10" y="0" width="2" height="12" fill="currentColor"/><path d="M12 6H15V0" fill="none" stroke="currentColor" stroke-width="2"/></g><g style="color:#A5A18F"><path d="M1 0V6H4" fill="none" stroke="currentColor" stroke-width="2"/><rect x="4" y="0" width="2" height="12" fill="currentColor"/><path d="M6 6L10 2" stroke="currentColor" stroke-width="1.5"/><rect x="10" y="0" width="2" height="12" fill="currentColor"/><path d="M12 6H15V0" fill="none" stroke="currentColor" stroke-width="2"/></g></svg>
<svg style="left:381px;top:59px" width="3" height="12" viewBox="0 0 3 12" shape-rendering="crispEdges"><g transform="translate(1,1)" style="color:#fff"><rect x="0" y="0" width="2" height="12" fill="currentColor"/></g><g style="color:#A5A18F"><rect x="0" y="0" width="2" height="12" fill="currentColor"/></g></svg>
<svg style="left:398px;top:64px" width="16" height="2" viewBox="0 0 16 2" shape-rendering="crispEdges"><g transform="translate(1,1)" style="color:#fff"><rect x="0" y="0" width="16" height="2" fill="currentColor"/></g><g style="color:#A5A18F"><rect x="0" y="0" width="16" height="2" fill="currentColor"/></g></svg>
<svg style="left:421px;top:59px" width="16" height="13" viewBox="0 0 16 13" shape-rendering="crispEdges"><g transform="translate(1,1)" style="color:#fff"><path d="M0 6H3M13 6H16" stroke="currentColor" stroke-width="2"/><path d="M5.5 1.5H10.5L12.5 4.5V8.5L10.5 11.5H5.5L3.5 8.5V4.5Z" fill="none" stroke="currentColor" stroke-width="1.6"/></g><g style="color:#A5A18F"><path d="M0 6H3M13 6H16" stroke="currentColor" stroke-width="2"/><path d="M5.5 1.5H10.5L12.5 4.5V8.5L10.5 11.5H5.5L3.5 8.5V4.5Z" fill="none" stroke="currentColor" stroke-width="1.6"/></g></svg>
<svg style="left:444px;top:59px" width="17" height="13" viewBox="0 0 17 13" shape-rendering="crispEdges"><g transform="translate(1,1)" style="color:#fff"><path d="M0 6H3M13 6H16" stroke="currentColor" stroke-width="2"/><path d="M5.5 1.5H10.5L12.5 4.5V8.5L10.5 11.5H5.5L3.5 8.5V4.5Z" fill="none" stroke="currentColor" stroke-width="1.6"/><path d="M3 12L13 1" stroke="currentColor" stroke-width="1.6"/></g><g style="color:#A5A18F"><path d="M0 6H3M13 6H16" stroke="currentColor" stroke-width="2"/><path d="M5.5 1.5H10.5L12.5 4.5V8.5L10.5 11.5H5.5L3.5 8.5V4.5Z" fill="none" stroke="currentColor" stroke-width="1.6"/><path d="M3 12L13 1" stroke="currentColor" stroke-width="1.6"/></g></svg>
<svg style="left:467px;top:58px" width="17" height="14" viewBox="0 0 17 14" shape-rendering="crispEdges"><g transform="translate(1,1)" style="color:#fff"><path d="M0 2H16" stroke="currentColor" stroke-width="2"/><path d="M4.5 0.5H10.5V13.5H4.5ZM4.5 5.5H10.5M4.5 9.5H10.5" fill="none" stroke="currentColor" stroke-width="1.3"/></g><g style="color:#A5A18F"><path d="M0 2H16" stroke="currentColor" stroke-width="2"/><path d="M4.5 0.5H10.5V13.5H4.5ZM4.5 5.5H10.5M4.5 9.5H10.5" fill="none" stroke="currentColor" stroke-width="1.3"/></g></svg>
<svg style="left:490px;top:58px" width="17" height="14" viewBox="0 0 17 14" shape-rendering="crispEdges"><g transform="translate(1,1)" style="color:#fff"><path d="M0 2H16M0 6H4M0 10H4" stroke="currentColor" stroke-width="1.6"/><path d="M4.5 0.5H10.5V13.5H4.5ZM4.5 5.5H10.5M4.5 9.5H10.5" fill="none" stroke="currentColor" stroke-width="1.3"/></g><g style="color:#A5A18F"><path d="M0 2H16M0 6H4M0 10H4" stroke="currentColor" stroke-width="1.6"/><path d="M4.5 0.5H10.5V13.5H4.5ZM4.5 5.5H10.5M4.5 9.5H10.5" fill="none" stroke="currentColor" stroke-width="1.3"/></g></svg>
<svg style="left:513px;top:58px" width="16" height="14" viewBox="0 0 16 14" shape-rendering="crispEdges"><g transform="translate(1,1)" style="color:#fff"><path d="M0 2H16" stroke="currentColor" stroke-width="2"/><path d="M2 5L8 9L2 13Z" fill="currentColor"/><path d="M9.5 2V13.5H15M9.5 8H15" fill="none" stroke="currentColor" stroke-width="1.5"/></g><g style="color:#A5A18F"><path d="M0 2H16" stroke="currentColor" stroke-width="2"/><path d="M2 5L8 9L2 13Z" fill="currentColor"/><path d="M9.5 2V13.5H15M9.5 8H15" fill="none" stroke="currentColor" stroke-width="1.5"/></g></svg>
<svg style="left:538px;top:58px" width="14" height="12" viewBox="0 0 14 12" shape-rendering="crispEdges"><g transform="translate(1,1)" style="color:#fff"><path d="M1 0V10H13" fill="none" stroke="currentColor" stroke-width="2"/></g><g style="color:#A5A18F"><path d="M1 0V10H13" fill="none" stroke="currentColor" stroke-width="2"/></g></svg>
<svg style="left:561px;top:58px" width="14" height="16" viewBox="0 0 14 16" shape-rendering="crispEdges"><g transform="translate(1,1)" style="color:#fff"><path d="M1 0V8" stroke="currentColor" stroke-width="2"/><path d="M1 12L12 2M3 5L12 14" stroke="currentColor" stroke-width="1.8" shape-rendering="auto"/></g><g style="color:#A5A18F"><path d="M1 0V8" stroke="currentColor" stroke-width="2"/><path d="M1 12L12 2M3 5L12 14" stroke="currentColor" stroke-width="1.8" shape-rendering="auto"/></g></svg>
<svg style="left:602px;top:59px" width="17" height="15" viewBox="0 0 17 15" shape-rendering="crispEdges"><g transform="translate(1,1)" style="color:#fff"><path d="M0.5 2.5H6.5V9.5H0.5Z" fill="none" stroke="currentColor"/><rect x="8" y="0" width="7" height="9" rx="2" fill="currentColor"/><path d="M0.5 11L1.5 14M3 11H5V12.5H3V14H5M6 14L8 11M9 11H11V12.5H9V14H11M12 14L14 11" fill="none" stroke="currentColor"/></g><g style="color:#A5A18F"><path d="M0.5 2.5H6.5V9.5H0.5Z" fill="none" stroke="currentColor"/><rect x="8" y="0" width="7" height="9" rx="2" fill="currentColor"/><path d="M0.5 11L1.5 14M3 11H5V12.5H3V14H5M6 14L8 11M9 11H11V12.5H9V14H11M12 14L14 11" fill="none" stroke="currentColor"/></g></svg>
<svg style="left:633px;top:58px" width="16" height="15" viewBox="0 0 16 15" shape-rendering="crispEdges"><g transform="translate(1,1)" style="color:#fff"><path d="M0.5 6.5L7.5 3.5L14.5 6.5L7.5 9.5Z" fill="none" stroke="currentColor"/><path d="M0.5 9.5L7.5 12.5L14.5 9.5M0.5 12.5L7.5 15L14.5 12.5" fill="none" stroke="currentColor"/><path d="M6 0H9V3H11L7.5 7L4 3H6Z" fill="currentColor"/></g><g style="color:#A5A18F"><path d="M0.5 6.5L7.5 3.5L14.5 6.5L7.5 9.5Z" fill="none" stroke="currentColor"/><path d="M0.5 9.5L7.5 12.5L14.5 9.5M0.5 12.5L7.5 15L14.5 12.5" fill="none" stroke="currentColor"/><path d="M6 0H9V3H11L7.5 7L4 3H6Z" fill="currentColor"/></g></svg>
<svg style="left:656px;top:58px" width="16" height="15" viewBox="0 0 16 15" shape-rendering="crispEdges"><rect x="1" y="4" width="14" height="11" fill="#000"/><rect x="2" y="5" width="12" height="9" fill="#fff"/><rect x="3" y="10" width="1" height="1" fill="#000"/><rect x="3" y="12" width="1" height="1" fill="#000"/><rect x="5" y="10" width="1" height="1" fill="#000"/><rect x="5" y="12" width="1" height="1" fill="#000"/><rect x="7" y="10" width="1" height="1" fill="#000"/><rect x="7" y="12" width="1" height="1" fill="#000"/><rect x="9" y="10" width="1" height="1" fill="#000"/><rect x="9" y="12" width="1" height="1" fill="#000"/><rect x="11" y="10" width="1" height="1" fill="#000"/><rect x="11" y="12" width="1" height="1" fill="#000"/><rect x="13" y="10" width="1" height="1" fill="#000"/><rect x="13" y="12" width="1" height="1" fill="#000"/><rect x="1" y="0" width="1" height="1" fill="#0000C0"/><rect x="3" y="2" width="1" height="1" fill="#0000C0"/><rect x="5" y="0" width="1" height="1" fill="#0000C0"/><rect x="7" y="2" width="1" height="1" fill="#0000C0"/><rect x="9" y="0" width="1" height="1" fill="#0000C0"/><rect x="11" y="2" width="1" height="1" fill="#0000C0"/><rect x="13" y="0" width="1" height="1" fill="#0000C0"/><path d="M4 3V7M2 5L4 8L6 5M11 3V7M9 5L11 8L13 5" stroke="#000080" stroke-width="1.5" fill="none"/></svg>
<svg style="left:686px;top:58px" width="16" height="15" viewBox="0 0 16 15" shape-rendering="crispEdges"><g transform="translate(1,1)" style="color:#fff"><rect x="0" y="2" width="7" height="7" rx="3" fill="currentColor"/><path d="M5.5 4.5H14.5V14.5H5.5Z" fill="#ECE9D8" stroke="currentColor"/><path d="M8 7H12L8 11H12M8 13H12" fill="none" stroke="currentColor"/></g><g style="color:#A5A18F"><rect x="0" y="2" width="7" height="7" rx="3" fill="currentColor"/><path d="M5.5 4.5H14.5V14.5H5.5Z" fill="#ECE9D8" stroke="currentColor"/><path d="M8 7H12L8 11H12M8 13H12" fill="none" stroke="currentColor"/></g></svg>
<svg style="left:15px;top:90px" width="16" height="14" viewBox="0 0 16 14" shape-rendering="crispEdges"><rect x="0.5" y="0.5" width="12" height="11" fill="#fff" stroke="#000"/><rect x="1" y="1" width="12" height="2" fill="#0A246A"/><rect x="3" y="3" width="1" height="8" fill="#000"/><path d="M7.5 6.5H10L11 7.5H15.5V13.5H7.5Z" fill="#FFFF00" stroke="#000"/><rect x="9" y="9" width="5" height="3" fill="#E0E040"/></svg>
<svg style="left:38px;top:88px" width="16" height="15" viewBox="0 0 16 15" shape-rendering="crispEdges"><rect x="1.5" y="0.5" width="13" height="10" fill="#fff" stroke="#000"/><rect x="2" y="1" width="12" height="2" fill="#0A246A"/><path d="M5 4L9 3L13 7L11 8L9 6Z" fill="#808000" stroke="#000" stroke-width="0.7" shape-rendering="auto"/><path d="M9 6L1 14" stroke="#800000" stroke-width="1.6" shape-rendering="auto"/></svg>
<svg style="left:61px;top:89px" width="16" height="14" viewBox="0 0 16 14" shape-rendering="crispEdges"><rect x="1.5" y="0.5" width="13" height="10" fill="#fff" stroke="#000"/><rect x="2" y="1" width="12" height="2" fill="#0A246A"/><path d="M4 8L7 5L9 7L12 4" fill="none" stroke="#808080"/><g transform="translate(0,10)"><path d="M0 1H1V0H2M14 0H15V1H16V3" fill="none" stroke="#000" stroke-width="1"/><path d="M3 0.5H6M2.5 1V3M6.5 1V3M3 3.5H6M10 0.5H13M9.5 1V3M13.5 1V3M10 3.5H13M7 0.5H9" fill="none" stroke="#000"/><rect x="3" y="1" width="3" height="2" fill="#30E8F8"/><rect x="10" y="1" width="3" height="2" fill="#30E8F8"/><rect x="3" y="1" width="1" height="1" fill="#fff"/><rect x="10" y="1" width="1" height="1" fill="#fff"/></g></svg>
<svg style="left:83px;top:88px" width="16" height="15" viewBox="0 0 16 15" shape-rendering="crispEdges"><rect x="1.5" y="0.5" width="13" height="10" fill="#fff" stroke="#000"/><rect x="2" y="1" width="12" height="2" fill="#0A246A"/><path d="M5 6H7M9 5V7M7 8L9 6" stroke="#000080"/><path d="M0.5 8.5H4.5L6.5 10.5V14.5H0.5Z" fill="#fff" stroke="#000"/><path d="M9.5 8.5H13.5L15.5 10.5V14.5H9.5Z" fill="#fff" stroke="#000"/></svg>
<svg style="left:106px;top:88px" width="16" height="15" viewBox="0 0 16 15" shape-rendering="crispEdges"><rect x="3.5" y="0.5" width="12" height="11" fill="#fff" stroke="#000"/><rect x="4" y="1" width="11" height="2" fill="#0A246A"/><rect x="7" y="4" width="1" height="1" fill="#A0A0A0"/><rect x="7" y="6" width="1" height="1" fill="#A0A0A0"/><rect x="7" y="8" width="1" height="1" fill="#A0A0A0"/><rect x="7" y="10" width="1" height="1" fill="#A0A0A0"/><rect x="9" y="4" width="1" height="1" fill="#A0A0A0"/><rect x="9" y="6" width="1" height="1" fill="#A0A0A0"/><rect x="9" y="8" width="1" height="1" fill="#A0A0A0"/><rect x="9" y="10" width="1" height="1" fill="#A0A0A0"/><rect x="11" y="4" width="1" height="1" fill="#A0A0A0"/><rect x="11" y="6" width="1" height="1" fill="#A0A0A0"/><rect x="11" y="8" width="1" height="1" fill="#A0A0A0"/><rect x="11" y="10" width="1" height="1" fill="#A0A0A0"/><rect x="13" y="4" width="1" height="1" fill="#A0A0A0"/><rect x="13" y="6" width="1" height="1" fill="#A0A0A0"/><rect x="13" y="8" width="1" height="1" fill="#A0A0A0"/><rect x="13" y="10" width="1" height="1" fill="#A0A0A0"/><rect x="0.5" y="8.5" width="5" height="5" rx="1" fill="#fff" stroke="#000"/><path d="M0 10H1M0 12H1" stroke="#000"/></svg>
<svg style="left:129px;top:88px" width="17" height="15" viewBox="0 0 17 15" shape-rendering="crispEdges"><path d="M0.5 4.5H11.5V14.5H0.5Z" fill="#fff" stroke="#000"/><path d="M2 9H10M2 12H10M5 9V14" stroke="#000"/><path d="M3 5L7 1L11 3" fill="#A0A0A0" stroke="#000" stroke-width="0.8" shape-rendering="auto"/><path d="M9 2H14V5H9Z" fill="#fff" stroke="#000" stroke-width="0.8"/><rect x="14" y="0" width="2" height="7" fill="#000080"/></svg>
<svg style="left:160px;top:88px" width="17" height="15" viewBox="0 0 17 15" shape-rendering="crispEdges"><path d="M0.5 7.5H4.5L6.5 9.5V14.5H0.5Z" fill="#fff" stroke="#000"/><path d="M9.5 7.5H13.5L15.5 9.5V14.5H9.5Z" fill="#fff" stroke="#000"/><path d="M5 2L11 7M11 2L5 7" stroke="#0000A0" shape-rendering="auto"/><path d="M2 4Q3 1 5 2M14 4Q13 1 11 2" fill="none" stroke="#000" stroke-dasharray="1 1"/></svg>
<svg style="left:185px;top:88px" width="14" height="14" viewBox="0 0 14 14" shape-rendering="crispEdges"><g transform="translate(1,1)" style="color:#fff"><rect x="0" y="0" width="11" height="4" rx="2" fill="currentColor"/><path d="M11 2L13 4V7" fill="none" stroke="currentColor"/><path d="M0 9H13M0.5 9V12M4.5 9V12M8.5 9V12" fill="none" stroke="currentColor" stroke-dasharray="2 1"/></g><g style="color:#A5A18F"><rect x="0" y="0" width="11" height="4" rx="2" fill="currentColor"/><path d="M11 2L13 4V7" fill="none" stroke="currentColor"/><path d="M0 9H13M0.5 9V12M4.5 9V12M8.5 9V12" fill="none" stroke="currentColor" stroke-dasharray="2 1"/></g></svg>
<svg style="left:206px;top:88px" width="16" height="15" viewBox="0 0 16 15" shape-rendering="crispEdges"><g transform="translate(1,1)" style="color:#fff"><path d="M0.5 0.5H13.5V9.5L11.5 11.5H9.5V13.5H3.5V14.5H0.5Z" fill="none" stroke="currentColor"/><path d="M2.5 2V12M4 6H8M7 2V6M10 2V6M10 4H12" stroke="currentColor"/></g><g style="color:#A5A18F"><path d="M0.5 0.5H13.5V9.5L11.5 11.5H9.5V13.5H3.5V14.5H0.5Z" fill="none" stroke="currentColor"/><path d="M2.5 2V12M4 6H8M7 2V6M10 2V6M10 4H12" stroke="currentColor"/></g></svg>
<svg style="left:230px;top:88px" width="15" height="15" viewBox="0 0 15 15" shape-rendering="crispEdges"><g transform="translate(1,1)" style="color:#fff"><path d="M0.5 0.5H13.5V13.5H0.5ZM0.5 2.5H13.5" fill="none" stroke="currentColor"/><rect x="3" y="5" width="8" height="2" fill="none" stroke="currentColor"/><path d="M2 9H12M2 11H12" stroke="currentColor" stroke-dasharray="2 1"/></g><g style="color:#A5A18F"><path d="M0.5 0.5H13.5V13.5H0.5ZM0.5 2.5H13.5" fill="none" stroke="currentColor"/><rect x="3" y="5" width="8" height="2" fill="none" stroke="currentColor"/><path d="M2 9H12M2 11H12" stroke="currentColor" stroke-dasharray="2 1"/></g></svg>
<svg style="left:253px;top:88px" width="15" height="15" viewBox="0 0 15 15" shape-rendering="crispEdges"><rect x="0" y="0" width="15" height="15" fill="#000"/><rect x="1" y="3" width="13" height="11" fill="#fff"/><path d="M1 1.5H14" stroke="#fff"/><text x="1.5" y="8.5" font-size="6" font-family="Liberation Mono" font-weight="bold" fill="#0000FF" textLength="12" shape-rendering="auto">0.01</text><text x="1.5" y="13.5" font-size="6" font-family="Liberation Mono" font-weight="bold" fill="#0000FF" textLength="12">0.02</text></svg>
<svg style="left:283px;top:88px" width="16" height="15" viewBox="0 0 16 15" shape-rendering="crispEdges"><text x="0.5" y="8" font-size="11" font-weight="bold" font-family="Liberation Sans" fill="#000" letter-spacing="0.5">10</text><g transform="translate(0,10)"><path d="M0 1H1V0H2M14 0H15V1H16V3" fill="none" stroke="#000" stroke-width="1"/><path d="M3 0.5H6M2.5 1V3M6.5 1V3M3 3.5H6M10 0.5H13M9.5 1V3M13.5 1V3M10 3.5H13M7 0.5H9" fill="none" stroke="#000"/><rect x="3" y="1" width="3" height="2" fill="#30E8F8"/><rect x="10" y="1" width="3" height="2" fill="#30E8F8"/><rect x="3" y="1" width="1" height="1" fill="#fff"/><rect x="10" y="1" width="1" height="1" fill="#fff"/></g></svg>
<svg style="left:306px;top:88px" width="16" height="15" viewBox="0 0 16 15" shape-rendering="crispEdges"><text x="0.5" y="8" font-size="11" font-weight="bold" font-family="Liberation Sans" fill="#000" letter-spacing="0.5">10</text><g transform="translate(0,10)"><path d="M0 1H1V0H2M14 0H15V1H16V3" fill="none" stroke="#000" stroke-width="1"/><path d="M3 0.5H6M2.5 1V3M6.5 1V3M3 3.5H6M10 0.5H13M9.5 1V3M13.5 1V3M10 3.5H13M7 0.5H9" fill="none" stroke="#000"/><rect x="3" y="1" width="3" height="2" fill="#30E8F8"/><rect x="10" y="1" width="3" height="2" fill="#30E8F8"/><rect x="3" y="1" width="1" height="1" fill="#fff"/><rect x="10" y="1" width="1" height="1" fill="#fff"/></g><path d="M0 7.5H7M3.5 4V11M9 7.5H14" stroke="#FFFF00" stroke-width="2"/></svg>
<svg style="left:329px;top:88px" width="16" height="15" viewBox="0 0 16 15" shape-rendering="crispEdges"><text x="0.5" y="8" font-size="11" font-weight="bold" font-family="Liberation Sans" fill="#000" letter-spacing="0.5">16</text><g transform="translate(0,10)"><path d="M0 1H1V0H2M14 0H15V1H16V3" fill="none" stroke="#000" stroke-width="1"/><path d="M3 0.5H6M2.5 1V3M6.5 1V3M3 3.5H6M10 0.5H13M9.5 1V3M13.5 1V3M10 3.5H13M7 0.5H9" fill="none" stroke="#000"/><rect x="3" y="1" width="3" height="2" fill="#30E8F8"/><rect x="10" y="1" width="3" height="2" fill="#30E8F8"/><rect x="3" y="1" width="1" height="1" fill="#fff"/><rect x="10" y="1" width="1" height="1" fill="#fff"/></g></svg>
<svg style="left:361px;top:88px" width="16" height="15" viewBox="0 0 16 15" shape-rendering="crispEdges"><g transform="translate(1,1)" style="color:#fff"><path d="M5 0L0 5H3V13H10V9H12V7H10V5H12V4L6 0Z" fill="currentColor"/><path d="M0 9H2M10 5H13M10 9H13" stroke="currentColor"/></g><g style="color:#A5A18F"><path d="M5 0L0 5H3V13H10V9H12V7H10V5H12V4L6 0Z" fill="currentColor"/><path d="M0 9H2M10 5H13M10 9H13" stroke="currentColor"/></g></svg>
<svg style="left:385px;top:88px" width="15" height="15" viewBox="0 0 15 15" shape-rendering="crispEdges"><g transform="translate(1,1)" style="color:#fff"><path d="M0 0H5L8 4V5H12V13H4V8H2Z" fill="currentColor"/><path d="M10 6H13M10 9H13" stroke="currentColor"/></g><g style="color:#A5A18F"><path d="M0 0H5L8 4V5H12V13H4V8H2Z" fill="currentColor"/><path d="M10 6H13M10 9H13" stroke="currentColor"/></g></svg>
<svg style="left:406px;top:88px" width="17" height="15" viewBox="0 0 17 15" shape-rendering="crispEdges"><g transform="translate(1,1)" style="color:#fff"><rect x="4" y="0" width="4" height="9" fill="currentColor" opacity="0.6"/><rect x="9" y="0" width="5" height="9" fill="currentColor"/><path d="M0 5H4M0 7H4M1 10L2 13M3 10H5V13M6 13L8 10M9 10H11V13M12 13L14 10" fill="none" stroke="currentColor"/></g><g style="color:#A5A18F"><rect x="4" y="0" width="4" height="9" fill="currentColor" opacity="0.6"/><rect x="9" y="0" width="5" height="9" fill="currentColor"/><path d="M0 5H4M0 7H4M1 10L2 13M3 10H5V13M6 13L8 10M9 10H11V13M12 13L14 10" fill="none" stroke="currentColor"/></g></svg>
<svg style="left:448px;top:88px" width="17" height="15" viewBox="0 0 17 15" shape-rendering="crispEdges"><g transform="translate(1,1)" style="color:#fff"><path d="M1 0H13Q15 0 15 2V4H4V6H15V13H1Z" fill="currentColor"/><path d="M5 10H13" stroke="#ECE9D8"/><rect x="3" y="10" width="1" height="1" fill="#ECE9D8"/></g><g style="color:#A5A18F"><path d="M1 0H13Q15 0 15 2V4H4V6H15V13H1Z" fill="currentColor"/><path d="M5 10H13" stroke="#ECE9D8"/><rect x="3" y="10" width="1" height="1" fill="#ECE9D8"/></g></svg>
<svg style="left:471px;top:88px" width="17" height="15" viewBox="0 0 17 15" shape-rendering="crispEdges"><g transform="translate(1,1)" style="color:#fff"><path d="M3 0H14Q16 0 16 2V10L12 13H2V8H5V4H0V2Q0 0 3 0Z" fill="currentColor"/><rect x="6" y="5" width="4" height="3" fill="#ECE9D8"/><path d="M4 12H11" stroke="#ECE9D8"/></g><g style="color:#A5A18F"><path d="M3 0H14Q16 0 16 2V10L12 13H2V8H5V4H0V2Q0 0 3 0Z" fill="currentColor"/><rect x="6" y="5" width="4" height="3" fill="#ECE9D8"/><path d="M4 12H11" stroke="#ECE9D8"/></g></svg>
<svg style="left:502px;top:88px" width="16" height="15" viewBox="0 0 16 15" shape-rendering="crispEdges"><g transform="translate(1,1)" style="color:#fff"><rect x="0" y="0" width="9" height="11" fill="currentColor"/><path d="M1 2H8M1 5H8M1 8H8" stroke="#ECE9D8"/><path d="M9.5 2.5H14.5V11" fill="none" stroke="currentColor"/><circle cx="11.5" cy="11.5" r="3" fill="currentColor" shape-rendering="auto"/><path d="M10 10L13 13M13 10L10 13" stroke="#ECE9D8"/></g><g style="color:#A5A18F"><rect x="0" y="0" width="9" height="11" fill="currentColor"/><path d="M1 2H8M1 5H8M1 8H8" stroke="#ECE9D8"/><path d="M9.5 2.5H14.5V11" fill="none" stroke="currentColor"/><circle cx="11.5" cy="11.5" r="3" fill="currentColor" shape-rendering="auto"/><path d="M10 10L13 13M13 10L10 13" stroke="#ECE9D8"/></g></svg>
<svg style="left:534px;top:88px" width="16" height="15" viewBox="0 0 16 15" shape-rendering="crispEdges"><g transform="translate(1,1)" style="color:#fff"><path d="M2.5 7.5V3.5H4.5V1.5H6.5V0.5H8.5V1.5H10.5V3.5H12.5V9.5L10.5 13.5H5.5L0.5 8.5L1.5 7.5L3.5 9" fill="none" stroke="currentColor"/><rect x="7" y="9" width="2" height="4" fill="currentColor"/><rect x="13" y="8" width="2" height="5" fill="currentColor"/></g><g style="color:#A5A18F"><path d="M2.5 7.5V3.5H4.5V1.5H6.5V0.5H8.5V1.5H10.5V3.5H12.5V9.5L10.5 13.5H5.5L0.5 8.5L1.5 7.5L3.5 9" fill="none" stroke="currentColor"/><rect x="7" y="9" width="2" height="4" fill="currentColor"/><rect x="13" y="8" width="2" height="5" fill="currentColor"/></g></svg>
<svg style="left:557px;top:88px" width="16" height="15" viewBox="0 0 16 15" shape-rendering="crispEdges"><g transform="translate(1,1)" style="color:#fff"><path d="M2.5 7.5V3.5H4.5V1.5H6.5V0.5H8.5V1.5H10.5V3.5H12.5V9.5L10.5 13.5H5.5L0.5 8.5L1.5 7.5L3.5 9" fill="none" stroke="currentColor"/><path d="M5 6L9 10M9 6L5 10" stroke="currentColor" stroke-width="2"/><rect x="13" y="8" width="2" height="5" fill="currentColor"/></g><g style="color:#A5A18F"><path d="M2.5 7.5V3.5H4.5V1.5H6.5V0.5H8.5V1.5H10.5V3.5H12.5V9.5L10.5 13.5H5.5L0.5 8.5L1.5 7.5L3.5 9" fill="none" stroke="currentColor"/><path d="M5 6L9 10M9 6L5 10" stroke="currentColor" stroke-width="2"/><rect x="13" y="8" width="2" height="5" fill="currentColor"/></g></svg>
<svg style="left:581px;top:88px" width="13" height="15" viewBox="0 0 13 15" shape-rendering="crispEdges"><g transform="translate(1,1)" style="color:#fff"><path d="M0 0L12 7L0 14Z" fill="currentColor"/></g><g style="color:#A5A18F"><path d="M0 0L12 7L0 14Z" fill="currentColor"/></g></svg>
<svg style="left:604px;top:88px" width="13" height="15" viewBox="0 0 13 15" shape-rendering="crispEdges"><g transform="translate(1,1)" style="color:#fff"><rect x="0" y="1" width="12" height="13" fill="currentColor"/></g><g style="color:#A5A18F"><rect x="0" y="1" width="12" height="13" fill="currentColor"/></g></svg>
<svg style="left:627px;top:88px" width="13" height="15" viewBox="0 0 13 15" shape-rendering="crispEdges"><g transform="translate(1,1)" style="color:#fff"><rect x="0" y="1" width="5" height="13" fill="currentColor"/><rect x="7" y="1" width="5" height="13" fill="currentColor"/></g><g style="color:#A5A18F"><rect x="0" y="1" width="5" height="13" fill="currentColor"/><rect x="7" y="1" width="5" height="13" fill="currentColor"/></g></svg>
<svg style="left:649px;top:88px" width="15" height="15" viewBox="0 0 15 15" shape-rendering="crispEdges"><g transform="translate(1,1)" style="color:#fff"><path d="M0 1L10 7.5L0 14Z" fill="currentColor"/><rect x="10" y="0" width="3" height="15" fill="currentColor"/></g><g style="color:#A5A18F"><path d="M0 1L10 7.5L0 14Z" fill="currentColor"/><rect x="10" y="0" width="3" height="15" fill="currentColor"/></g></svg>
<svg style="left:672px;top:88px" width="15" height="15" viewBox="0 0 15 15" shape-rendering="crispEdges"><g transform="translate(1,1)" style="color:#fff"><path d="M0 1L5 4L0 7Z" fill="currentColor"/><rect x="5" y="0" width="2" height="9" fill="currentColor"/><path d="M7 5H13V12H3V9" fill="currentColor"/><path d="M11 6H14M11 9H14" stroke="currentColor"/></g><g style="color:#A5A18F"><path d="M0 1L5 4L0 7Z" fill="currentColor"/><rect x="5" y="0" width="2" height="9" fill="currentColor"/><path d="M7 5H13V12H3V9" fill="currentColor"/><path d="M11 6H14M11 9H14" stroke="currentColor"/></g></svg>
<svg style="left:695px;top:88px" width="10" height="15" viewBox="0 0 10 15" shape-rendering="crispEdges"><g transform="translate(1,1)" style="color:#fff"><path d="M0 5H3M0 8H3M0 11H3" stroke="currentColor"/><rect x="3" y="3" width="10" height="10" fill="currentColor"/><rect x="6" y="0" width="2" height="4" fill="currentColor"/></g><g style="color:#A5A18F"><path d="M0 5H3M0 8H3M0 11H3" stroke="currentColor"/><rect x="3" y="3" width="10" height="10" fill="currentColor"/><rect x="6" y="0" width="2" height="4" fill="currentColor"/></g></svg>
<div style="left:5px;top:116px;width:265px;height:1px;background:#FFFFFF;"></div>
<div style="left:5px;top:118px;width:265px;height:1px;background:#ACA899;"></div>
<div style="left:5px;top:120px;width:265px;height:1px;background:#FFFFFF;"></div>
<div style="left:5px;top:122px;width:265px;height:1px;background:#ACA899;"></div>
<div style="left:270px;top:113px;width:12px;height:13px;background:#ECE9D8;"></div>
<div style="left:270px;top:113px;width:12px;height:1px;background:#FFFFFF;"></div>
<div style="left:270px;top:113px;width:1px;height:13px;background:#FFFFFF;"></div>
<div style="left:270px;top:125px;width:12px;height:1px;background:#716F64;"></div>
<div style="left:281px;top:113px;width:1px;height:13px;background:#716F64;"></div>
<div style="left:271px;top:124px;width:10px;height:1px;background:#ACA899;"></div>
<div style="left:280px;top:114px;width:1px;height:11px;background:#ACA899;"></div>
<div style="left:284px;top:113px;width:12px;height:13px;background:#ECE9D8;"></div>
<div style="left:284px;top:113px;width:12px;height:1px;background:#FFFFFF;"></div>
<div style="left:284px;top:113px;width:1px;height:13px;background:#FFFFFF;"></div>
<div style="left:284px;top:125px;width:12px;height:1px;background:#716F64;"></div>
<div style="left:295px;top:113px;width:1px;height:13px;background:#716F64;"></div>
<div style="left:285px;top:124px;width:10px;height:1px;background:#ACA899;"></div>
<div style="left:294px;top:114px;width:1px;height:11px;background:#ACA899;"></div>
<svg style="left:272px;top:115px" width="8" height="8" viewBox="0 0 8 8" shape-rendering="crispEdges"><path d="M1 3H7L4 6Z" fill="#ACA899"/></svg>
<svg style="left:286px;top:115px" width="8" height="8" viewBox="0 0 8 8" shape-rendering="crispEdges"><path d="M1.5 1.5L6.5 6.5M6.5 1.5L1.5 6.5" stroke="#000" stroke-width="2" fill="none" shape-rendering="auto"/></svg>
<div style="left:3px;top:127px;width:1px;height:377px;background:#ACA899;"></div>
<div style="left:4px;top:128px;width:1px;height:376px;background:#716F64;"></div>
<div style="left:3px;top:127px;width:294px;height:1px;background:#ACA899;"></div>
<div style="left:4px;top:128px;width:292px;height:1px;background:#716F64;"></div>
<div style="left:5px;top:129px;width:291px;height:357px;background:#FFFFFF;"></div>
<div style="left:296px;top:112px;width:1px;height:392px;background:#FFFFFF;"></div>
<div style="left:302px;top:112px;width:1px;height:392px;background:#FFFFFF;"></div>
<div style="left:0px;top:504px;width:306px;height:1px;background:#ACA899;"></div>
<div style="left:0px;top:505px;width:306px;height:1px;background:#FFFFFF;"></div>
<div style="left:48px;top:486px;width:248px;height:1px;background:#000;"></div>
<svg style="left:4px;top:486px" width="46" height="18" viewBox="0 0 46 18" shape-rendering="crispEdges"><path d="M1 0L8 16H38L44 0" fill="#fff" stroke="none"/><path d="M1.5 0.5L8.5 16.5M38.5 16.5L44.5 0.5" stroke="#000" fill="none" shape-rendering="auto"/><path d="M8 16H38" stroke="#ACA899"/></svg>
<div class="t " style="left:14px;top:487px;color:#000;"><span class="c">工程</span></div>
<div style="left:307px;top:111px;width:1px;height:374px;background:#000;"></div>
<div style="left:307px;top:111px;width:397px;height:1px;background:#000;"></div>
<div style="left:356px;top:112px;width:1px;height:144px;background:#ACA899;"></div>
<div style="left:308px;top:212px;width:48px;height:1px;background:#ACA899;"></div>
<div style="left:308px;top:213px;width:48px;height:1px;background:#FFFFFF;"></div>
<div style="left:308px;top:255px;width:49px;height:1px;background:#ACA899;"></div>
<div style="left:308px;top:256px;width:50px;height:1px;background:#FFFFFF;"></div>
<div style="left:361px;top:112px;width:1px;height:145px;background:#208020;"></div>
<div style="left:361px;top:118px;width:9px;height:48px;background:#217D21;"></div>
<div style="left:370px;top:118px;width:334px;height:48px;background:#FFFF00;"></div>
<div style="left:362px;top:117px;width:342px;height:1px;background:#DCDCDC;"></div>
<div style="left:362px;top:166px;width:342px;height:1px;background:#DCDCDC;"></div>
<div style="left:362px;top:214px;width:342px;height:1px;background:#DCDCDC;"></div>
<div style="left:362px;top:257px;width:342px;height:1px;background:#DCDCDC;"></div>
<div class="t " style="left:311px;top:114px;color:#000;"><i>0</i></div>
<div class="t " style="left:343px;top:125px;color:#000;"><i>0</i></div>
<div class="t " style="left:311px;top:217px;color:#000;"><i>1</i></div>
<div class="t " style="left:374px;top:118px;color:#000;"><i>[</i><span class="c">程序名</span><i>&nbsp;</i><i>:</i><i>&nbsp;</i><span class="c">新程序</span><i>1</i><i>]</i></div>
<div class="t " style="left:374px;top:142px;color:#000;"><i>[</i><span class="c">段名称</span><i>&nbsp;</i><i>:</i><i>&nbsp;</i><span class="c">段</span><i>1</i><i>]</i></div>
<div style="left:362px;top:189px;width:342px;height:5px;background:#40FF40;"></div>
<div style="left:362px;top:191px;width:342px;height:1px;background:#000;"></div>
<svg style="left:359px;top:169px" width="108" height="50" viewBox="0 0 108 50" shape-rendering="crispEdges"><defs><pattern id="hp" width="4" height="4" patternUnits="userSpaceOnUse"><rect width="4" height="4" fill="#fff"/><rect x="3" y="0" width="1" height="1" fill="#000"/><rect x="2" y="1" width="1" height="1" fill="#000"/><rect x="1" y="2" width="1" height="1" fill="#000"/><rect x="0" y="3" width="1" height="1" fill="#000"/></pattern></defs><rect x="0" y="0" width="108" height="3" fill="url(#hp)"/><rect x="0" y="47" width="108" height="3" fill="url(#hp)"/><rect x="0" y="0" width="3" height="50" fill="url(#hp)"/><rect x="105" y="0" width="3" height="50" fill="url(#hp)"/></svg>
<div style="left:565px;top:172px;width:3px;height:1px;background:#C8C8D8;"></div>
<div style="left:566px;top:171px;width:1px;height:3px;background:#C8C8D8;"></div>
<div style="left:667px;top:172px;width:3px;height:1px;background:#C8C8D8;"></div>
<div style="left:668px;top:171px;width:1px;height:3px;background:#C8C8D8;"></div>
<div style="left:565px;top:215px;width:3px;height:1px;background:#C8C8D8;"></div>
<div style="left:566px;top:214px;width:1px;height:3px;background:#C8C8D8;"></div>
<div style="left:667px;top:215px;width:3px;height:1px;background:#C8C8D8;"></div>
<div style="left:668px;top:214px;width:1px;height:3px;background:#C8C8D8;"></div>
<div style="left:464px;top:258px;width:3px;height:1px;background:#C8C8D8;"></div>
<div style="left:465px;top:257px;width:1px;height:3px;background:#C8C8D8;"></div>
<div style="left:565px;top:258px;width:3px;height:1px;background:#C8C8D8;"></div>
<div style="left:566px;top:257px;width:1px;height:3px;background:#C8C8D8;"></div>
<div style="left:667px;top:258px;width:3px;height:1px;background:#C8C8D8;"></div>
<div style="left:668px;top:257px;width:1px;height:3px;background:#C8C8D8;"></div>
<div style="left:308px;top:468px;width:6px;height:16px;background:#ECE9D8;"></div>
<div style="left:308px;top:468px;width:1px;height:16px;background:#FFFFFF;"></div>
<div style="left:308px;top:468px;width:6px;height:1px;background:#FFFFFF;"></div>
<div style="left:314px;top:468px;width:1px;height:17px;background:#000;"></div>
<div style="left:307px;top:484px;width:8px;height:1px;background:#000;"></div>
<div style="left:316px;top:468px;width:16px;height:16px;background:#ECE9D8;"></div>
<div style="left:316px;top:468px;width:16px;height:1px;background:#FFFFFF;"></div>
<div style="left:316px;top:468px;width:1px;height:16px;background:#FFFFFF;"></div>
<div style="left:316px;top:483px;width:16px;height:1px;background:#716F64;"></div>
<div style="left:331px;top:468px;width:1px;height:16px;background:#716F64;"></div>
<div style="left:317px;top:482px;width:14px;height:1px;background:#ACA899;"></div>
<div style="left:330px;top:469px;width:1px;height:14px;background:#ACA899;"></div>
<svg style="left:319px;top:471px" width="10" height="10" viewBox="0 0 10 10" shape-rendering="crispEdges"><path d="M7 1V9L3 5Z" fill="#000"/></svg>
<div style="left:332px;top:468px;width:303px;height:16px;background:#ECE9D8;"></div>
<div style="left:332px;top:468px;width:303px;height:1px;background:#FFFFFF;"></div>
<div style="left:332px;top:468px;width:1px;height:16px;background:#FFFFFF;"></div>
<div style="left:332px;top:483px;width:303px;height:1px;background:#716F64;"></div>
<div style="left:634px;top:468px;width:1px;height:16px;background:#716F64;"></div>
<div style="left:333px;top:482px;width:301px;height:1px;background:#ACA899;"></div>
<div style="left:633px;top:469px;width:1px;height:14px;background:#ACA899;"></div>
<div style="left:635px;top:468px;width:69px;height:16px;background:#F6F5EF;background-image:repeating-conic-gradient(#fff 0 25%,#ECE9D8 0 50%);background-size:2px 2px;"></div>
<div style="left:307px;top:486px;width:397px;height:1px;background:#FFFFFF;"></div>
<div style="left:307px;top:490px;width:11px;height:11px;background:#D4D0C8;"></div>
<div style="left:307px;top:490px;width:11px;height:1px;background:#FFFFFF;"></div>
<div style="left:307px;top:490px;width:1px;height:11px;background:#FFFFFF;"></div>
<div style="left:307px;top:500px;width:11px;height:1px;background:#404040;"></div>
<div style="left:317px;top:490px;width:1px;height:11px;background:#404040;"></div>
<div style="left:308px;top:499px;width:9px;height:1px;background:#808080;"></div>
<div style="left:316px;top:491px;width:1px;height:9px;background:#808080;"></div>
<div style="left:320px;top:490px;width:12px;height:11px;background:#D4D0C8;"></div>
<div style="left:320px;top:490px;width:12px;height:1px;background:#FFFFFF;"></div>
<div style="left:320px;top:490px;width:1px;height:11px;background:#FFFFFF;"></div>
<div style="left:320px;top:500px;width:12px;height:1px;background:#404040;"></div>
<div style="left:331px;top:490px;width:1px;height:11px;background:#404040;"></div>
<div style="left:321px;top:499px;width:10px;height:1px;background:#808080;"></div>
<div style="left:330px;top:491px;width:1px;height:9px;background:#808080;"></div>
<svg style="left:309px;top:492px" width="7" height="7" viewBox="0 0 7 7" shape-rendering="crispEdges"><path d="M1 1L6 6M6 1L1 6" stroke="#000" stroke-width="1.6" fill="none" shape-rendering="auto"/></svg>
<svg style="left:323px;top:492px" width="7" height="7" viewBox="0 0 7 7" shape-rendering="crispEdges"><path d="M5 1V6L2 3.5Z" fill="#000"/></svg>
<div style="left:334px;top:489px;width:42px;height:1px;background:#ACA899;"></div>
<div style="left:334px;top:489px;width:1px;height:17px;background:#ACA899;"></div>
<div style="left:334px;top:505px;width:42px;height:1px;background:#FFFFFF;"></div>
<div style="left:375px;top:489px;width:1px;height:17px;background:#FFFFFF;"></div>
<div class="t " style="left:379px;top:491px;color:#000;"><span class="c">名称</span><i>:</i></div>
<div style="left:413px;top:489px;width:128px;height:1px;background:#ACA899;"></div>
<div style="left:413px;top:489px;width:1px;height:17px;background:#ACA899;"></div>
<div style="left:413px;top:505px;width:128px;height:1px;background:#FFFFFF;"></div>
<div style="left:540px;top:489px;width:1px;height:17px;background:#FFFFFF;"></div>
<div class="t " style="left:543px;top:491px;color:#000;"><span class="c">地址值</span><i>:</i></div>
<div style="left:589px;top:489px;width:71px;height:1px;background:#ACA899;"></div>
<div style="left:589px;top:489px;width:1px;height:17px;background:#ACA899;"></div>
<div style="left:589px;top:505px;width:71px;height:1px;background:#FFFFFF;"></div>
<div style="left:659px;top:489px;width:1px;height:17px;background:#FFFFFF;"></div>
<div class="t " style="left:663px;top:491px;color:#000;"><span class="c">注释</span><i>:</i></div>
<div style="left:697px;top:489px;width:14px;height:1px;background:#ACA899;"></div>
<div style="left:697px;top:489px;width:1px;height:17px;background:#ACA899;"></div>
<div style="left:697px;top:505px;width:14px;height:1px;background:#FFFFFF;"></div>
<div style="left:710px;top:489px;width:1px;height:17px;background:#FFFFFF;"></div>
<div style="left:0px;top:509px;width:704px;height:1px;background:#716F64;"></div>
<div style="left:0px;top:510px;width:704px;height:1px;background:#000;"></div>
<div style="left:5px;top:516px;width:11px;height:11px;background:#ECE9D8;"></div>
<div style="left:5px;top:516px;width:11px;height:1px;background:#FFFFFF;"></div>
<div style="left:5px;top:516px;width:1px;height:11px;background:#FFFFFF;"></div>
<div style="left:5px;top:526px;width:11px;height:1px;background:#716F64;"></div>
<div style="left:15px;top:516px;width:1px;height:11px;background:#716F64;"></div>
<div style="left:6px;top:525px;width:9px;height:1px;background:#ACA899;"></div>
<div style="left:14px;top:517px;width:1px;height:9px;background:#ACA899;"></div>
<svg style="left:7px;top:518px" width="7" height="7" viewBox="0 0 7 7" shape-rendering="crispEdges"><path d="M1 1L6 6M6 1L1 6" stroke="#000" stroke-width="1.8" fill="none" shape-rendering="auto"/></svg>
<div style="left:5px;top:528px;width:11px;height:12px;background:#ECE9D8;"></div>
<div style="left:5px;top:528px;width:11px;height:1px;background:#FFFFFF;"></div>
<div style="left:5px;top:528px;width:1px;height:12px;background:#FFFFFF;"></div>
<div style="left:5px;top:539px;width:11px;height:1px;background:#716F64;"></div>
<div style="left:15px;top:528px;width:1px;height:12px;background:#716F64;"></div>
<div style="left:6px;top:538px;width:9px;height:1px;background:#ACA899;"></div>
<div style="left:14px;top:529px;width:1px;height:10px;background:#ACA899;"></div>
<svg style="left:7px;top:530px" width="7" height="8" viewBox="0 0 7 8" shape-rendering="crispEdges"><path d="M2 1V7L6 4Z" fill="#ACA899"/></svg>
<div style="left:7px;top:542px;width:2px;height:30px;background:#FFFFFF;"></div>
<div style="left:9px;top:542px;width:1px;height:30px;background:#ACA899;"></div>
<div style="left:11px;top:542px;width:2px;height:30px;background:#FFFFFF;"></div>
<div style="left:13px;top:542px;width:1px;height:30px;background:#ACA899;"></div>
<div style="left:18px;top:514px;width:1px;height:58px;background:#ACA899;"></div>
<div style="left:19px;top:515px;width:1px;height:57px;background:#716F64;"></div>
<div style="left:18px;top:514px;width:686px;height:1px;background:#ACA899;"></div>
<div style="left:19px;top:515px;width:685px;height:1px;background:#716F64;"></div>
<div style="left:20px;top:516px;width:684px;height:16px;background:#ECE9D8;"></div>
<div style="left:20px;top:516px;width:60px;height:1px;background:#FFFFFF;"></div>
<div style="left:20px;top:516px;width:1px;height:16px;background:#FFFFFF;"></div>
<div style="left:77px;top:517px;width:1px;height:14px;background:#ACA899;"></div>
<div style="left:20px;top:530px;width:58px;height:1px;background:#ACA899;"></div>
<div style="left:78px;top:516px;width:1px;height:16px;background:#ECE9D8;"></div>
<div class="t " style="left:25px;top:519px;color:#000;"><i>P</i><i>L</i><i>C</i><span class="c">名称</span></div>
<div style="left:80px;top:516px;width:59px;height:1px;background:#FFFFFF;"></div>
<div style="left:80px;top:516px;width:1px;height:16px;background:#FFFFFF;"></div>
<div style="left:136px;top:517px;width:1px;height:14px;background:#ACA899;"></div>
<div style="left:80px;top:530px;width:57px;height:1px;background:#ACA899;"></div>
<div style="left:137px;top:516px;width:1px;height:16px;background:#ECE9D8;"></div>
<div class="t " style="left:85px;top:519px;color:#000;"><span class="c">名称</span></div>
<div style="left:139px;top:516px;width:61px;height:1px;background:#FFFFFF;"></div>
<div style="left:139px;top:516px;width:1px;height:16px;background:#FFFFFF;"></div>
<div style="left:197px;top:517px;width:1px;height:14px;background:#ACA899;"></div>
<div style="left:139px;top:530px;width:59px;height:1px;background:#ACA899;"></div>
<div style="left:198px;top:516px;width:1px;height:16px;background:#ECE9D8;"></div>
<div class="t " style="left:144px;top:519px;color:#000;"><span class="c">地址</span></div>
<div style="left:200px;top:516px;width:101px;height:1px;background:#FFFFFF;"></div>
<div style="left:200px;top:516px;width:1px;height:16px;background:#FFFFFF;"></div>
<div style="left:298px;top:517px;width:1px;height:14px;background:#ACA899;"></div>
<div style="left:200px;top:530px;width:99px;height:1px;background:#ACA899;"></div>
<div style="left:299px;top:516px;width:1px;height:16px;background:#ECE9D8;"></div>
<div class="t " style="left:205px;top:519px;color:#000;"><span class="c">数据类型</span><i>/</i><span class="c">格式</span></div>
<div style="left:301px;top:516px;width:70px;height:1px;background:#FFFFFF;"></div>
<div style="left:301px;top:516px;width:1px;height:16px;background:#FFFFFF;"></div>
<div style="left:368px;top:517px;width:1px;height:14px;background:#ACA899;"></div>
<div style="left:301px;top:530px;width:68px;height:1px;background:#ACA899;"></div>
<div style="left:369px;top:516px;width:1px;height:16px;background:#ECE9D8;"></div>
<div class="t " style="left:306px;top:519px;color:#000;"><span class="c">功能块</span><i>.</i><i>.</i><i>.</i></div>
<div style="left:371px;top:516px;width:123px;height:1px;background:#FFFFFF;"></div>
<div style="left:371px;top:516px;width:1px;height:16px;background:#FFFFFF;"></div>
<div style="left:491px;top:517px;width:1px;height:14px;background:#ACA899;"></div>
<div style="left:371px;top:530px;width:121px;height:1px;background:#ACA899;"></div>
<div style="left:492px;top:516px;width:1px;height:16px;background:#ECE9D8;"></div>
<div class="t " style="left:376px;top:519px;color:#000;"><span class="c">值</span></div>
<div style="left:494px;top:516px;width:197px;height:1px;background:#FFFFFF;"></div>
<div style="left:494px;top:516px;width:1px;height:16px;background:#FFFFFF;"></div>
<div style="left:688px;top:517px;width:1px;height:14px;background:#ACA899;"></div>
<div style="left:494px;top:530px;width:195px;height:1px;background:#ACA899;"></div>
<div style="left:689px;top:516px;width:1px;height:16px;background:#ECE9D8;"></div>
<div class="t " style="left:499px;top:519px;color:#000;"><span class="c">值</span><i>(</i><span class="c">二进制</span><i>)</i></div>
<div style="left:691px;top:516px;width:69px;height:1px;background:#FFFFFF;"></div>
<div style="left:691px;top:516px;width:1px;height:16px;background:#FFFFFF;"></div>
<div style="left:757px;top:517px;width:1px;height:14px;background:#ACA899;"></div>
<div style="left:691px;top:530px;width:67px;height:1px;background:#ACA899;"></div>
<div style="left:758px;top:516px;width:1px;height:16px;background:#ECE9D8;"></div>
<div class="t " style="left:696px;top:519px;color:#000;"><span class="c">注释</span></div>
<div style="left:20px;top:532px;width:684px;height:27px;background:#FFFFFF;"></div>
<div style="left:20px;top:559px;width:2px;height:13px;background:#FFFFFF;"></div>
<div style="left:20px;top:546px;width:684px;height:1px;background:#EAE7D6;"></div>
<div style="left:80px;top:532px;width:1px;height:27px;background:#EAE7D6;"></div>
<div style="left:139px;top:532px;width:1px;height:27px;background:#EAE7D6;"></div>
<div style="left:200px;top:532px;width:1px;height:27px;background:#EAE7D6;"></div>
<div style="left:301px;top:532px;width:1px;height:27px;background:#EAE7D6;"></div>
<div style="left:371px;top:532px;width:1px;height:27px;background:#EAE7D6;"></div>
<div style="left:494px;top:532px;width:1px;height:27px;background:#EAE7D6;"></div>
<div style="left:691px;top:532px;width:1px;height:27px;background:#EAE7D6;"></div>
<div class="t " style="left:23px;top:535px;color:#000;"><span class="c">新</span><i>P</i><i>L</i><i>C</i><i>1</i></div>
<div class="t " style="left:145px;top:535px;color:#000;"><i>D</i><i>3</i><i>2</i><i>1</i><i>5</i><i>5</i></div>
<div class="t " style="left:206px;top:535px;color:#000;"><i>C</i><i>H</i><i>A</i><i>N</i><i>N</i><i>E</i><i>L</i><i>&nbsp;</i><i>(</i><span class="c">十</span><i>.</i><i>.</i><i>.</i></div>
<div class="t " style="left:377px;top:535px;color:#000;"><i>C</i><i>0</i><i>A</i><i>8</i><i>&nbsp;</i><span class="c">十六进制</span></div>
<div class="t " style="left:500px;top:535px;color:#000;"><i>1</i><i>1</i><i>0</i><i>0</i><i>&nbsp;</i><i>0</i><i>0</i><i>0</i><i>0</i><i>&nbsp;</i><i>1</i><i>0</i><i>1</i><i>0</i><i>&nbsp;</i><i>1</i><i>0</i><i>0</i><i>0</i></div>
<div class="t " style="left:23px;top:548px;color:#000;"><span class="c">新</span><i>P</i><i>L</i><i>C</i><i>1</i></div>
<div class="t " style="left:145px;top:548px;color:#000;"><i>D</i><i>3</i><i>2</i><i>1</i><i>5</i><i>6</i></div>
<div class="t " style="left:206px;top:548px;color:#000;"><i>C</i><i>H</i><i>A</i><i>N</i><i>N</i><i>E</i><i>L</i><i>&nbsp;</i><i>(</i><span class="c">十</span><i>.</i><i>.</i><i>.</i></div>
<div class="t " style="left:377px;top:548px;color:#000;"><i>0</i><i>2</i><i>C</i><i>6</i><i>&nbsp;</i><span class="c">十六进制</span></div>
<div class="t " style="left:500px;top:548px;color:#000;"><i>0</i><i>0</i><i>0</i><i>0</i><i>&nbsp;</i><i>0</i><i>0</i><i>1</i><i>0</i><i>&nbsp;</i><i>1</i><i>1</i><i>0</i><i>0</i><i>&nbsp;</i><i>0</i><i>1</i><i>1</i><i>0</i></div>
<div style="left:135px;top:500px;width:65px;height:3px;background:#FF2B2B;"></div>
<div style="left:135px;top:567px;width:65px;height:3px;background:#FF2B2B;"></div>
<div style="left:135px;top:500px;width:3px;height:70px;background:#FF2B2B;"></div>
<div style="left:197px;top:500px;width:3px;height:70px;background:#FF2B2B;"></div>
<div style="left:368px;top:507px;width:124px;height:3px;background:#FF2B2B;"></div>
<div style="left:368px;top:562px;width:124px;height:3px;background:#FF2B2B;"></div>
<div style="left:368px;top:507px;width:3px;height:58px;background:#FF2B2B;"></div>
<div style="left:489px;top:507px;width:3px;height:58px;background:#FF2B2B;"></div>
<div style="left:32px;top:145px;width:1px;height:1px;background:#A0A0A0;"></div>
<div style="left:32px;top:147px;width:1px;height:1px;background:#A0A0A0;"></div>
<div style="left:32px;top:149px;width:1px;height:1px;background:#A0A0A0;"></div>
<div style="left:51px;top:160px;width:1px;height:1px;background:#A0A0A0;"></div>
<div style="left:51px;top:162px;width:1px;height:1px;background:#A0A0A0;"></div>
<div style="left:51px;top:164px;width:1px;height:1px;background:#A0A0A0;"></div>
<div style="left:51px;top:166px;width:1px;height:1px;background:#A0A0A0;"></div>
<div style="left:51px;top:168px;width:1px;height:1px;background:#A0A0A0;"></div>
<div style="left:51px;top:170px;width:1px;height:1px;background:#A0A0A0;"></div>
<div style="left:51px;top:172px;width:1px;height:1px;background:#A0A0A0;"></div>
<div style="left:51px;top:174px;width:1px;height:1px;background:#A0A0A0;"></div>
<div style="left:51px;top:176px;width:1px;height:1px;background:#A0A0A0;"></div>
<div style="left:51px;top:178px;width:1px;height:1px;background:#A0A0A0;"></div>
<div style="left:51px;top:180px;width:1px;height:1px;background:#A0A0A0;"></div>
<div style="left:51px;top:182px;width:1px;height:1px;background:#A0A0A0;"></div>
<div style="left:51px;top:184px;width:1px;height:1px;background:#A0A0A0;"></div>
<div style="left:51px;top:186px;width:1px;height:1px;background:#A0A0A0;"></div>
<div style="left:51px;top:188px;width:1px;height:1px;background:#A0A0A0;"></div>
<div style="left:51px;top:190px;width:1px;height:1px;background:#A0A0A0;"></div>
<div style="left:51px;top:192px;width:1px;height:1px;background:#A0A0A0;"></div>
<div style="left:51px;top:194px;width:1px;height:1px;background:#A0A0A0;"></div>
<div style="left:51px;top:196px;width:1px;height:1px;background:#A0A0A0;"></div>
<div style="left:51px;top:198px;width:1px;height:1px;background:#A0A0A0;"></div>
<div style="left:51px;top:200px;width:1px;height:1px;background:#A0A0A0;"></div>
<div style="left:51px;top:202px;width:1px;height:1px;background:#A0A0A0;"></div>
<div style="left:51px;top:204px;width:1px;height:1px;background:#A0A0A0;"></div>
<div style="left:51px;top:206px;width:1px;height:1px;background:#A0A0A0;"></div>
<div style="left:51px;top:208px;width:1px;height:1px;background:#A0A0A0;"></div>
<div style="left:51px;top:210px;width:1px;height:1px;background:#A0A0A0;"></div>
<div style="left:51px;top:212px;width:1px;height:1px;background:#A0A0A0;"></div>
<div style="left:51px;top:214px;width:1px;height:1px;background:#A0A0A0;"></div>
<div style="left:51px;top:216px;width:1px;height:1px;background:#A0A0A0;"></div>
<div style="left:51px;top:218px;width:1px;height:1px;background:#A0A0A0;"></div>
<div style="left:51px;top:220px;width:1px;height:1px;background:#A0A0A0;"></div>
<div style="left:51px;top:222px;width:1px;height:1px;background:#A0A0A0;"></div>
<div style="left:51px;top:224px;width:1px;height:1px;background:#A0A0A0;"></div>
<div style="left:51px;top:226px;width:1px;height:1px;background:#A0A0A0;"></div>
<div style="left:51px;top:228px;width:1px;height:1px;background:#A0A0A0;"></div>
<div style="left:51px;top:230px;width:1px;height:1px;background:#A0A0A0;"></div>
<div style="left:51px;top:232px;width:1px;height:1px;background:#A0A0A0;"></div>
<div style="left:51px;top:234px;width:1px;height:1px;background:#A0A0A0;"></div>
<div style="left:51px;top:236px;width:1px;height:1px;background:#A0A0A0;"></div>
<div style="left:51px;top:238px;width:1px;height:1px;background:#A0A0A0;"></div>
<div style="left:51px;top:240px;width:1px;height:1px;background:#A0A0A0;"></div>
<div style="left:51px;top:242px;width:1px;height:1px;background:#A0A0A0;"></div>
<div style="left:51px;top:244px;width:1px;height:1px;background:#A0A0A0;"></div>
<div style="left:51px;top:246px;width:1px;height:1px;background:#A0A0A0;"></div>
<div style="left:51px;top:248px;width:1px;height:1px;background:#A0A0A0;"></div>
<div style="left:51px;top:250px;width:1px;height:1px;background:#A0A0A0;"></div>
<div style="left:51px;top:252px;width:1px;height:1px;background:#A0A0A0;"></div>
<div style="left:51px;top:254px;width:1px;height:1px;background:#A0A0A0;"></div>
<div style="left:51px;top:256px;width:1px;height:1px;background:#A0A0A0;"></div>
<div style="left:51px;top:258px;width:1px;height:1px;background:#A0A0A0;"></div>
<div style="left:51px;top:260px;width:1px;height:1px;background:#A0A0A0;"></div>
<div style="left:51px;top:262px;width:1px;height:1px;background:#A0A0A0;"></div>
<div style="left:51px;top:264px;width:1px;height:1px;background:#A0A0A0;"></div>
<div style="left:51px;top:266px;width:1px;height:1px;background:#A0A0A0;"></div>
<div style="left:51px;top:268px;width:1px;height:1px;background:#A0A0A0;"></div>
<div style="left:51px;top:270px;width:1px;height:1px;background:#A0A0A0;"></div>
<div style="left:51px;top:272px;width:1px;height:1px;background:#A0A0A0;"></div>
<div style="left:51px;top:274px;width:1px;height:1px;background:#A0A0A0;"></div>
<div style="left:51px;top:276px;width:1px;height:1px;background:#A0A0A0;"></div>
<div style="left:51px;top:278px;width:1px;height:1px;background:#A0A0A0;"></div>
<div style="left:51px;top:280px;width:1px;height:1px;background:#A0A0A0;"></div>
<div style="left:51px;top:282px;width:1px;height:1px;background:#A0A0A0;"></div>
<div style="left:51px;top:284px;width:1px;height:1px;background:#A0A0A0;"></div>
<div style="left:51px;top:286px;width:1px;height:1px;background:#A0A0A0;"></div>
<div style="left:51px;top:288px;width:1px;height:1px;background:#A0A0A0;"></div>
<div style="left:51px;top:290px;width:1px;height:1px;background:#A0A0A0;"></div>
<div style="left:51px;top:292px;width:1px;height:1px;background:#A0A0A0;"></div>
<div style="left:51px;top:294px;width:1px;height:1px;background:#A0A0A0;"></div>
<div style="left:51px;top:296px;width:1px;height:1px;background:#A0A0A0;"></div>
<div style="left:51px;top:298px;width:1px;height:1px;background:#A0A0A0;"></div>
<div style="left:51px;top:300px;width:1px;height:1px;background:#A0A0A0;"></div>
<div style="left:51px;top:302px;width:1px;height:1px;background:#A0A0A0;"></div>
<div style="left:51px;top:304px;width:1px;height:1px;background:#A0A0A0;"></div>
<div style="left:51px;top:306px;width:1px;height:1px;background:#A0A0A0;"></div>
<div style="left:51px;top:308px;width:1px;height:1px;background:#A0A0A0;"></div>
<div style="left:51px;top:310px;width:1px;height:1px;background:#A0A0A0;"></div>
<div style="left:51px;top:312px;width:1px;height:1px;background:#A0A0A0;"></div>
<div style="left:51px;top:314px;width:1px;height:1px;background:#A0A0A0;"></div>
<div style="left:51px;top:316px;width:1px;height:1px;background:#A0A0A0;"></div>
<div style="left:51px;top:318px;width:1px;height:1px;background:#A0A0A0;"></div>
<div style="left:51px;top:320px;width:1px;height:1px;background:#A0A0A0;"></div>
<div style="left:51px;top:322px;width:1px;height:1px;background:#A0A0A0;"></div>
<div style="left:51px;top:324px;width:1px;height:1px;background:#A0A0A0;"></div>
<div style="left:51px;top:326px;width:1px;height:1px;background:#A0A0A0;"></div>
<div style="left:51px;top:328px;width:1px;height:1px;background:#A0A0A0;"></div>
<div style="left:70px;top:271px;width:1px;height:1px;background:#A0A0A0;"></div>
<div style="left:70px;top:273px;width:1px;height:1px;background:#A0A0A0;"></div>
<div style="left:70px;top:275px;width:1px;height:1px;background:#A0A0A0;"></div>
<div style="left:89px;top:287px;width:1px;height:1px;background:#A0A0A0;"></div>
<div style="left:89px;top:289px;width:1px;height:1px;background:#A0A0A0;"></div>
<div style="left:89px;top:291px;width:1px;height:1px;background:#A0A0A0;"></div>
<div style="left:89px;top:293px;width:1px;height:1px;background:#A0A0A0;"></div>
<div style="left:89px;top:295px;width:1px;height:1px;background:#A0A0A0;"></div>
<div style="left:89px;top:297px;width:1px;height:1px;background:#A0A0A0;"></div>
<div style="left:89px;top:299px;width:1px;height:1px;background:#A0A0A0;"></div>
<div style="left:89px;top:301px;width:1px;height:1px;background:#A0A0A0;"></div>
<div style="left:89px;top:303px;width:1px;height:1px;background:#A0A0A0;"></div>
<div style="left:89px;top:305px;width:1px;height:1px;background:#A0A0A0;"></div>
<div style="left:89px;top:307px;width:1px;height:1px;background:#A0A0A0;"></div>
<div style="left:89px;top:309px;width:1px;height:1px;background:#A0A0A0;"></div>
<div style="left:89px;top:311px;width:1px;height:1px;background:#A0A0A0;"></div>
<div style="left:89px;top:313px;width:1px;height:1px;background:#A0A0A0;"></div>
<div style="left:9px;top:133px;width:9px;height:9px;background:#FFFFFF;"></div>
<div style="left:9px;top:133px;width:9px;height:1px;background:#ACA899;"></div>
<div style="left:9px;top:141px;width:9px;height:1px;background:#ACA899;"></div>
<div style="left:9px;top:133px;width:1px;height:9px;background:#ACA899;"></div>
<div style="left:17px;top:133px;width:1px;height:9px;background:#ACA899;"></div>
<div style="left:11px;top:137px;width:5px;height:1px;background:#000;"></div>
<div style="left:19px;top:137px;width:1px;height:1px;background:#A0A0A0;"></div>
<div style="left:21px;top:137px;width:1px;height:1px;background:#A0A0A0;"></div>
<div class="t " style="left:45px;top:132px;color:#000;"><span class="c">新工程</span></div>
<div style="left:28px;top:149px;width:9px;height:9px;background:#FFFFFF;"></div>
<div style="left:28px;top:149px;width:9px;height:1px;background:#ACA899;"></div>
<div style="left:28px;top:157px;width:9px;height:1px;background:#ACA899;"></div>
<div style="left:28px;top:149px;width:1px;height:9px;background:#ACA899;"></div>
<div style="left:36px;top:149px;width:1px;height:9px;background:#ACA899;"></div>
<div style="left:30px;top:153px;width:5px;height:1px;background:#000;"></div>
<div style="left:38px;top:153px;width:1px;height:1px;background:#A0A0A0;"></div>
<div style="left:40px;top:153px;width:1px;height:1px;background:#A0A0A0;"></div>
<div class="t " style="left:64px;top:148px;color:#000;"><span class="c">新</span><i>P</i><i>L</i><i>C</i><i>1</i><i>[</i><i>C</i><i>P</i><i>1</i><i>H</i><i>]</i><i>&nbsp;</i><span class="c">运行模式</span></div>
<div style="left:53px;top:169px;width:1px;height:1px;background:#A0A0A0;"></div>
<div style="left:55px;top:169px;width:1px;height:1px;background:#A0A0A0;"></div>
<div style="left:57px;top:169px;width:1px;height:1px;background:#A0A0A0;"></div>
<div style="left:59px;top:169px;width:1px;height:1px;background:#A0A0A0;"></div>
<div class="t " style="left:83px;top:164px;color:#000;"><span class="c">符号</span></div>
<div style="left:53px;top:185px;width:1px;height:1px;background:#A0A0A0;"></div>
<div style="left:55px;top:185px;width:1px;height:1px;background:#A0A0A0;"></div>
<div style="left:57px;top:185px;width:1px;height:1px;background:#A0A0A0;"></div>
<div style="left:59px;top:185px;width:1px;height:1px;background:#A0A0A0;"></div>
<div class="t " style="left:83px;top:180px;color:#000;"><i>I</i><i>O</i><span class="c">表和单元设置</span></div>
<div style="left:53px;top:201px;width:1px;height:1px;background:#A0A0A0;"></div>
<div style="left:55px;top:201px;width:1px;height:1px;background:#A0A0A0;"></div>
<div style="left:57px;top:201px;width:1px;height:1px;background:#A0A0A0;"></div>
<div style="left:59px;top:201px;width:1px;height:1px;background:#A0A0A0;"></div>
<div style="left:81px;top:193px;width:28px;height:16px;background:#316AC5;"></div>
<div style="left:81px;top:193px;width:1px;height:1px;background:#F0A030;"></div>
<div style="left:81px;top:208px;width:1px;height:1px;background:#F0A030;"></div>
<div style="left:83px;top:193px;width:1px;height:1px;background:#F0A030;"></div>
<div style="left:83px;top:208px;width:1px;height:1px;background:#F0A030;"></div>
<div style="left:85px;top:193px;width:1px;height:1px;background:#F0A030;"></div>
<div style="left:85px;top:208px;width:1px;height:1px;background:#F0A030;"></div>
<div style="left:87px;top:193px;width:1px;height:1px;background:#F0A030;"></div>
<div style="left:87px;top:208px;width:1px;height:1px;background:#F0A030;"></div>
<div style="left:89px;top:193px;width:1px;height:1px;background:#F0A030;"></div>
<div style="left:89px;top:208px;width:1px;height:1px;background:#F0A030;"></div>
<div style="left:91px;top:193px;width:1px;height:1px;background:#F0A030;"></div>
<div style="left:91px;top:208px;width:1px;height:1px;background:#F0A030;"></div>
<div style="left:93px;top:193px;width:1px;height:1px;background:#F0A030;"></div>
<div style="left:93px;top:208px;width:1px;height:1px;background:#F0A030;"></div>
<div style="left:95px;top:193px;width:1px;height:1px;background:#F0A030;"></div>
<div style="left:95px;top:208px;width:1px;height:1px;background:#F0A030;"></div>
<div style="left:97px;top:193px;width:1px;height:1px;background:#F0A030;"></div>
<div style="left:97px;top:208px;width:1px;height:1px;background:#F0A030;"></div>
<div style="left:99px;top:193px;width:1px;height:1px;background:#F0A030;"></div>
<div style="left:99px;top:208px;width:1px;height:1px;background:#F0A030;"></div>
<div style="left:101px;top:193px;width:1px;height:1px;background:#F0A030;"></div>
<div style="left:101px;top:208px;width:1px;height:1px;background:#F0A030;"></div>
<div style="left:103px;top:193px;width:1px;height:1px;background:#F0A030;"></div>
<div style="left:103px;top:208px;width:1px;height:1px;background:#F0A030;"></div>
<div style="left:105px;top:193px;width:1px;height:1px;background:#F0A030;"></div>
<div style="left:105px;top:208px;width:1px;height:1px;background:#F0A030;"></div>
<div style="left:107px;top:193px;width:1px;height:1px;background:#F0A030;"></div>
<div style="left:107px;top:208px;width:1px;height:1px;background:#F0A030;"></div>
<div style="left:81px;top:193px;width:1px;height:1px;background:#F0A030;"></div>
<div style="left:108px;top:193px;width:1px;height:1px;background:#F0A030;"></div>
<div style="left:81px;top:195px;width:1px;height:1px;background:#F0A030;"></div>
<div style="left:108px;top:195px;width:1px;height:1px;background:#F0A030;"></div>
<div style="left:81px;top:197px;width:1px;height:1px;background:#F0A030;"></div>
<div style="left:108px;top:197px;width:1px;height:1px;background:#F0A030;"></div>
<div style="left:81px;top:199px;width:1px;height:1px;background:#F0A030;"></div>
<div style="left:108px;top:199px;width:1px;height:1px;background:#F0A030;"></div>
<div style="left:81px;top:201px;width:1px;height:1px;background:#F0A030;"></div>
<div style="left:108px;top:201px;width:1px;height:1px;background:#F0A030;"></div>
<div style="left:81px;top:203px;width:1px;height:1px;background:#F0A030;"></div>
<div style="left:108px;top:203px;width:1px;height:1px;background:#F0A030;"></div>
<div style="left:81px;top:205px;width:1px;height:1px;background:#F0A030;"></div>
<div style="left:108px;top:205px;width:1px;height:1px;background:#F0A030;"></div>
<div style="left:81px;top:207px;width:1px;height:1px;background:#F0A030;"></div>
<div style="left:108px;top:207px;width:1px;height:1px;background:#F0A030;"></div>
<div class="t " style="left:83px;top:196px;color:#fff;"><span class="c">设置</span></div>
<div style="left:53px;top:217px;width:1px;height:1px;background:#A0A0A0;"></div>
<div style="left:55px;top:217px;width:1px;height:1px;background:#A0A0A0;"></div>
<div style="left:57px;top:217px;width:1px;height:1px;background:#A0A0A0;"></div>
<div style="left:59px;top:217px;width:1px;height:1px;background:#A0A0A0;"></div>
<div class="t " style="left:83px;top:212px;color:#000;"><span class="c">错误日志</span></div>
<div style="left:53px;top:233px;width:1px;height:1px;background:#A0A0A0;"></div>
<div style="left:55px;top:233px;width:1px;height:1px;background:#A0A0A0;"></div>
<div style="left:57px;top:233px;width:1px;height:1px;background:#A0A0A0;"></div>
<div style="left:59px;top:233px;width:1px;height:1px;background:#A0A0A0;"></div>
<div class="t " style="left:83px;top:228px;color:#000;"><i>P</i><i>L</i><i>C</i><i>&nbsp;</i><span class="c">时钟</span></div>
<div style="left:53px;top:249px;width:1px;height:1px;background:#A0A0A0;"></div>
<div style="left:55px;top:249px;width:1px;height:1px;background:#A0A0A0;"></div>
<div style="left:57px;top:249px;width:1px;height:1px;background:#A0A0A0;"></div>
<div style="left:59px;top:249px;width:1px;height:1px;background:#A0A0A0;"></div>
<div class="t " style="left:83px;top:244px;color:#000;"><span class="c">内存</span></div>
<div style="left:47px;top:261px;width:9px;height:9px;background:#FFFFFF;"></div>
<div style="left:47px;top:261px;width:9px;height:1px;background:#ACA899;"></div>
<div style="left:47px;top:269px;width:9px;height:1px;background:#ACA899;"></div>
<div style="left:47px;top:261px;width:1px;height:9px;background:#ACA899;"></div>
<div style="left:55px;top:261px;width:1px;height:9px;background:#ACA899;"></div>
<div style="left:49px;top:265px;width:5px;height:1px;background:#000;"></div>
<div style="left:57px;top:265px;width:1px;height:1px;background:#A0A0A0;"></div>
<div style="left:59px;top:265px;width:1px;height:1px;background:#A0A0A0;"></div>
<div class="t " style="left:83px;top:260px;color:#000;"><span class="c">程序</span></div>
<div style="left:66px;top:277px;width:9px;height:9px;background:#FFFFFF;"></div>
<div style="left:66px;top:277px;width:9px;height:1px;background:#ACA899;"></div>
<div style="left:66px;top:285px;width:9px;height:1px;background:#ACA899;"></div>
<div style="left:66px;top:277px;width:1px;height:9px;background:#ACA899;"></div>
<div style="left:74px;top:277px;width:1px;height:9px;background:#ACA899;"></div>
<div style="left:68px;top:281px;width:5px;height:1px;background:#000;"></div>
<div style="left:76px;top:281px;width:1px;height:1px;background:#A0A0A0;"></div>
<div style="left:78px;top:281px;width:1px;height:1px;background:#A0A0A0;"></div>
<div class="t " style="left:102px;top:276px;color:#000;"><span class="c">新程序</span><i>1</i><i>&nbsp;</i><i>(</i><i>0</i><i>0</i><i>)</i><span class="c">运行中</span></div>
<div style="left:91px;top:297px;width:1px;height:1px;background:#A0A0A0;"></div>
<div style="left:93px;top:297px;width:1px;height:1px;background:#A0A0A0;"></div>
<div style="left:95px;top:297px;width:1px;height:1px;background:#A0A0A0;"></div>
<div style="left:97px;top:297px;width:1px;height:1px;background:#A0A0A0;"></div>
<div class="t " style="left:121px;top:292px;color:#000;"><span class="c">符号</span></div>
<div style="left:91px;top:313px;width:1px;height:1px;background:#A0A0A0;"></div>
<div style="left:93px;top:313px;width:1px;height:1px;background:#A0A0A0;"></div>
<div style="left:95px;top:313px;width:1px;height:1px;background:#A0A0A0;"></div>
<div style="left:97px;top:313px;width:1px;height:1px;background:#A0A0A0;"></div>
<div class="t " style="left:121px;top:308px;color:#000;"><span class="c">段</span><i>1</i></div>
<div style="left:53px;top:329px;width:1px;height:1px;background:#A0A0A0;"></div>
<div style="left:55px;top:329px;width:1px;height:1px;background:#A0A0A0;"></div>
<div style="left:57px;top:329px;width:1px;height:1px;background:#A0A0A0;"></div>
<div style="left:59px;top:329px;width:1px;height:1px;background:#A0A0A0;"></div>
<div class="t " style="left:83px;top:324px;color:#000;"><span class="c">功能块</span></div>
<svg style="left:23px;top:129px" width="17" height="16" viewBox="0 0 17 16" shape-rendering="crispEdges"><rect x="3" y="0" width="7" height="3" rx="1" fill="#000"/><rect x="4" y="1" width="5" height="1" fill="#fff"/><rect x="0" y="6" width="5" height="3" rx="1" fill="#000"/><rect x="6" y="6" width="5" height="3" rx="1" fill="#000"/><rect x="12" y="6" width="5" height="3" rx="1" fill="#000"/><rect x="1" y="7" width="3" height="1" fill="#fff"/><rect x="7" y="7" width="3" height="1" fill="#fff"/><rect x="13" y="7" width="3" height="1" fill="#fff"/><rect x="3" y="12" width="5" height="3" rx="1" fill="#000"/><rect x="9" y="12" width="5" height="3" rx="1" fill="#000"/><rect x="4" y="13" width="3" height="1" fill="#fff"/><rect x="10" y="13" width="3" height="1" fill="#fff"/><path d="M6.5 3V5M2 4.5H15M2.5 5V6M8.5 5V6M14.5 5V6M8.5 9V11M5 10.5H12M5.5 11V12M11.5 11V12" fill="none" stroke="#000"/></svg>
<svg style="left:43px;top:147px" width="16" height="12" viewBox="0 0 16 12" shape-rendering="crispEdges"><path d="M2 0H15L16 1V10L14 12H0V2Z" fill="#000"/><rect x="2" y="2" width="12" height="1" fill="#909090"/><rect x="3" y="5" width="1" height="2" fill="#f00"/><rect x="5" y="5" width="1" height="2" fill="#f00"/><rect x="1" y="9" width="3" height="2" fill="#0f0"/><rect x="5" y="9" width="9" height="1" fill="#A0A0A0"/></svg>
<svg style="left:64px;top:162px" width="13" height="15" viewBox="0 0 13 15" shape-rendering="crispEdges"><rect x="0.5" y="0.5" width="10" height="5" rx="2" fill="#FFFF80" stroke="#808000"/><rect x="2" y="2" width="7" height="2" fill="#FFFF00"/><rect x="9" y="2" width="2" height="2" fill="#000"/><path d="M11.5 3V9.5" stroke="#000"/><path d="M0 9.5H12" fill="none" stroke="#000" stroke-dasharray="3 1"/><path d="M0.5 10V14M4.5 10V14M8.5 10V14M11.5 10V14" fill="none" stroke="#000" stroke-dasharray="2 1"/></svg>
<svg style="left:63px;top:178px" width="15" height="14" viewBox="0 0 15 14" shape-rendering="crispEdges"><rect x="0" y="0" width="15" height="14" fill="#00FFFF"/><rect x="1" y="3" width="5" height="9" rx="1" fill="#000"/><rect x="2" y="3" width="3" height="1" fill="#FFFF00"/><rect x="2" y="12" width="2" height="2" fill="#000"/><rect x="7" y="0" width="8" height="3" fill="#000"/><rect x="10" y="3" width="3" height="10" fill="#000"/><rect x="11" y="4" width="1" height="8" fill="#FFFF00"/></svg>
<svg style="left:64px;top:194px" width="13" height="14" viewBox="0 0 13 14" shape-rendering="crispEdges"><path d="M0.5 1.5H11.5V13.5H0.5Z" fill="#fff" stroke="#000"/><path d="M1 0.5H11" stroke="#000" stroke-dasharray="1 1"/><path d="M2 4H5M7 4H10M2 7H4M2 10H4" stroke="#808080"/><circle cx="8" cy="9" r="2.5" fill="#FFFF00" stroke="#000" shape-rendering="auto"/><rect x="7.5" y="8.5" width="1" height="1" fill="#000"/><path d="M12 2V14H1" stroke="#808080" fill="none"/></svg>
<svg style="left:62px;top:210px" width="16" height="14" viewBox="0 0 16 14" shape-rendering="crispEdges"><path d="M0.5 0.5H7.5L10.5 3.5V12.5H0.5Z" fill="#fff" stroke="#000"/><path d="M2 3H6M2 5H6M2 7H5M2 9H5" stroke="#808080"/><circle cx="10.5" cy="9" r="4.5" fill="#F02020" shape-rendering="auto"/><path d="M8.5 7L12.5 11M12.5 7L8.5 11" stroke="#fff" stroke-width="1.5"/></svg>
<svg style="left:62px;top:226px" width="16" height="15" viewBox="0 0 16 15" shape-rendering="crispEdges"><path d="M2.5 3.5Q2.5 0.5 7.5 0.5Q12.5 0.5 12.5 3.5V12.5H0.5V6Q0.5 3.5 2.5 3.5Z" fill="#C0C0C0" stroke="#000"/><path d="M5 0.5H10" stroke="#B0B020"/><rect x="3.5" y="3.5" width="8" height="7" rx="2" fill="#fff" stroke="#000"/><path d="M7.5 5V7.5H9.5M5 7H6M9 5L10 6" stroke="#000"/><path d="M1 13H14V11" stroke="#606060" fill="none"/></svg>
<svg style="left:62px;top:242px" width="16" height="13" viewBox="0 0 16 13" shape-rendering="crispEdges"><path d="M0 7L11 1L15 4L4 10Z" fill="#B0B0B0" stroke="#000" stroke-width="0.8" shape-rendering="auto"/><path d="M4 10V12M6 9V11.5M8 8V10.5M10 7V9.5M12 6V8.5M14 5V7.5" stroke="#000"/></svg>
<svg style="left:62px;top:257px" width="17" height="15" viewBox="0 0 17 15" shape-rendering="crispEdges"><defs><pattern id="ck" width="3" height="3" patternUnits="userSpaceOnUse"><rect width="3" height="3" fill="#FFFF00"/><rect x="0" y="0" width="1" height="1" fill="#000"/><rect x="1" y="1" width="1" height="1" fill="#000"/><rect x="2" y="0" width="1" height="1" fill="#000"/></pattern></defs><path d="M0 0H8L16 13V14H8L0 2Z" fill="url(#ck)"/><path d="M0 0.5H8M8 14.5H16" stroke="#000"/></svg>
<svg style="left:81px;top:273px" width="17" height="16" viewBox="0 0 17 16" shape-rendering="crispEdges"><path d="M4.5 7.5Q0.5 7 0.5 4Q0.5 0.5 8 0.5Q15.5 0.5 15.5 4Q15.5 6 14 7" fill="none" stroke="#000" shape-rendering="auto"/><defs><pattern id="ck2" width="2" height="2" patternUnits="userSpaceOnUse"><rect width="2" height="2" fill="#FFFF00"/><rect width="1" height="1" fill="#000"/></pattern></defs><path d="M5 7L7 6L9 7L11 5L13 7L15 7L14 10L16 12L13 13L12 16L10 14L8 16L7 13L4 12L6 10Z" fill="url(#ck2)" stroke="#000" stroke-width="0.7" shape-rendering="auto"/><rect x="9" y="9" width="2" height="3" fill="#fff"/></svg>
<svg style="left:102px;top:290px" width="13" height="15" viewBox="0 0 13 15" shape-rendering="crispEdges"><rect x="0.5" y="0.5" width="10" height="5" rx="2" fill="#FFFF80" stroke="#808000"/><rect x="2" y="2" width="7" height="2" fill="#FFFF00"/><rect x="9" y="2" width="2" height="2" fill="#000"/><path d="M11.5 3V9.5" stroke="#000"/><path d="M0 9.5H12" fill="none" stroke="#000" stroke-dasharray="3 1"/><path d="M0.5 10V14M4.5 10V14M8.5 10V14M11.5 10V14" fill="none" stroke="#000" stroke-dasharray="2 1"/></svg>
<svg style="left:102px;top:306px" width="13" height="14" viewBox="0 0 13 14" shape-rendering="crispEdges"><path d="M2.5 0.5H10.5L12.5 2.5V8.5L9.5 11.5H3.5L0.5 8.5V2.5Z" fill="#FFFF00" stroke="#000"/><path d="M1 3H12" stroke="#000"/><path d="M4 5H9V6H5V7H9V8H4" fill="none" stroke="#000"/><rect x="5" y="11" width="3" height="3" fill="#FFFF00" stroke="#000" stroke-width="0.6"/></svg>
<svg style="left:63px;top:322px" width="15" height="14" viewBox="0 0 15 14" shape-rendering="crispEdges"><rect x="4.5" y="0.5" width="6" height="13" fill="#B8B8B8" stroke="#000"/><path d="M0 2.5H4M0 5.5H4M0 8.5H4M0 11.5H4M11 2.5H15M11 5.5H15M11 8.5H15M11 11.5H15" stroke="#000"/></svg>
</body></html>
